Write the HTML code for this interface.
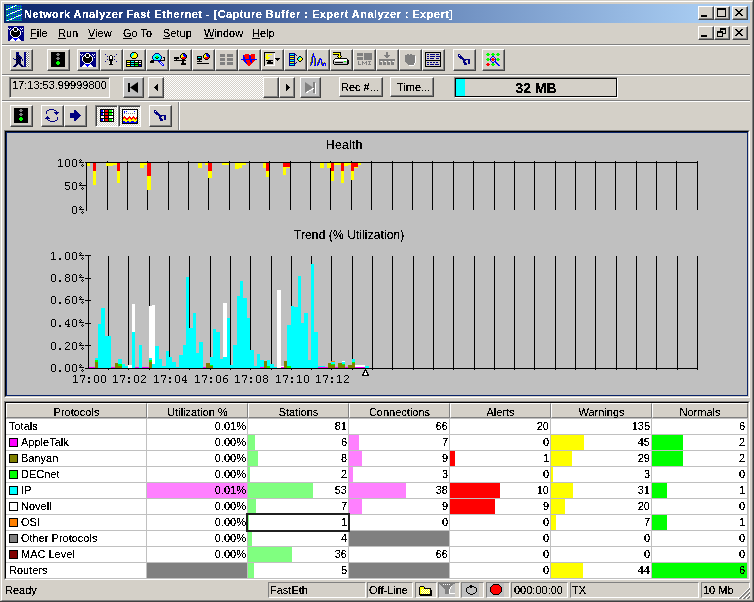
<!DOCTYPE html>
<html><head><meta charset="utf-8">
<style>
*{margin:0;padding:0;box-sizing:border-box}
html,body{width:754px;height:602px;overflow:hidden;background:#D4D0C8;font-family:"Liberation Sans",sans-serif;font-size:11px;color:#000}
.a{position:absolute}
.t{position:absolute;white-space:nowrap;line-height:13px;filter:url(#crisp)}
.tx{filter:url(#crisp)}
.cb{position:absolute;width:16px;height:14px;background:#D4D0C8;border-top:1px solid #fff;border-left:1px solid #fff;border-right:1px solid #404040;border-bottom:1px solid #404040;box-shadow:inset -1px -1px 0 #808080}
.tb{position:absolute;background:#D4D0C8;border-top:1px solid #fff;border-left:1px solid #fff;border-right:1px solid #404040;border-bottom:1px solid #404040;box-shadow:inset -1px -1px 0 #808080}
.tbp{position:absolute;border-top:1px solid #808080;border-left:1px solid #808080;border-right:1px solid #fff;border-bottom:1px solid #fff;box-shadow:inset 1px 1px 0 #404040;background-color:#fff;background-image:linear-gradient(45deg,#D4D0C8 25%,transparent 25%,transparent 75%,#D4D0C8 75%),linear-gradient(45deg,#D4D0C8 25%,transparent 25%,transparent 75%,#D4D0C8 75%);background-size:2px 2px;background-position:0 0,1px 1px}
.sep{position:absolute;height:2px;border-top:1px solid #808080;border-bottom:1px solid #fff}
.sunk{position:absolute;border-top:1px solid #808080;border-left:1px solid #808080;border-right:1px solid #fff;border-bottom:1px solid #fff}
.ic{position:absolute;left:3px;top:2px}
.m{font-family:"Liberation Mono",monospace;font-size:12px}
.cell{position:absolute;height:15px}
.num{position:absolute;text-align:right;white-space:nowrap;line-height:13px;filter:url(#crisp)}
.hd{position:absolute;top:403px;height:15px;background:#D4D0C8;text-align:center;line-height:13px;padding-top:2px;border-top:1px solid #fff;border-left:1px solid #fff;border-right:1px solid #808080;border-bottom:1px solid #808080}
.gbtn{background:#C0C0C0}
.sw{position:absolute;width:9px;height:9px;border:1px solid #000}
</style></head><body>
<svg width="0" height="0" style="position:absolute"><filter id="crisp" x="-5%" y="-5%" width="110%" height="110%"><feComponentTransfer><feFuncA type="discrete" tableValues="0 0 1 1 1"/></feComponentTransfer></filter></svg>
<div id="root" style="position:absolute;left:0;top:0;width:754px;height:602px;will-change:transform;background:#D4D0C8">

<div class="a" style="left:0;top:0;width:754px;height:602px;border-right:1px solid #404040;border-bottom:1px solid #404040"></div>
<div class="a" style="left:1px;top:1px;width:752px;height:600px;border-top:1px solid #fff;border-left:1px solid #fff;border-right:1px solid #808080;border-bottom:1px solid #808080"></div>
<div class="a" style="left:4px;top:4px;width:746px;height:19px;background:linear-gradient(to right,#0A246A 0px,#A6CAF0 692px)"></div>
<svg class="a" style="left:6px;top:5px" width="16" height="16" shape-rendering="crispEdges"><rect x="0" y="0" width="1" height="1" fill="#008080"/><rect x="1" y="0" width="1" height="1" fill="#0000FF"/><rect x="2" y="0" width="1" height="1" fill="#008080"/><rect x="3" y="0" width="1" height="1" fill="#0000FF"/><rect x="4" y="0" width="1" height="1" fill="#008080"/><rect x="5" y="0" width="1" height="1" fill="#0000FF"/><rect x="6" y="0" width="1" height="1" fill="#008080"/><rect x="7" y="0" width="1" height="1" fill="#0000FF"/><rect x="8" y="0" width="1" height="1" fill="#008080"/><rect x="9" y="0" width="1" height="1" fill="#FFFFFF"/><rect x="10" y="0" width="1" height="1" fill="#00FFFF"/><rect x="11" y="0" width="1" height="1" fill="#0000FF"/><rect x="12" y="0" width="1" height="1" fill="#008080"/><rect x="13" y="0" width="1" height="1" fill="#0000FF"/><rect x="14" y="0" width="1" height="1" fill="#008080"/><rect x="15" y="0" width="1" height="1" fill="#0000FF"/><rect x="0" y="1" width="6" height="1" fill="#008080"/><rect x="6" y="1" width="1" height="1" fill="#FFFFFF"/><rect x="7" y="1" width="1" height="1" fill="#00FFFF"/><rect x="8" y="1" width="1" height="1" fill="#FFFFFF"/><rect x="9" y="1" width="7" height="1" fill="#008080"/><rect x="0" y="2" width="1" height="1" fill="#008080"/><rect x="1" y="2" width="1" height="1" fill="#0000FF"/><rect x="2" y="2" width="1" height="1" fill="#008080"/><rect x="3" y="2" width="1" height="1" fill="#0000FF"/><rect x="4" y="2" width="1" height="1" fill="#00FFFF"/><rect x="5" y="2" width="2" height="1" fill="#FFFFFF"/><rect x="7" y="2" width="1" height="1" fill="#0000FF"/><rect x="8" y="2" width="1" height="1" fill="#008080"/><rect x="9" y="2" width="1" height="1" fill="#0000FF"/><rect x="10" y="2" width="1" height="1" fill="#008080"/><rect x="11" y="2" width="1" height="1" fill="#0000FF"/><rect x="12" y="2" width="1" height="1" fill="#008080"/><rect x="13" y="2" width="1" height="1" fill="#0000FF"/><rect x="14" y="2" width="1" height="1" fill="#008080"/><rect x="15" y="2" width="1" height="1" fill="#0000FF"/><rect x="0" y="3" width="2" height="1" fill="#008080"/><rect x="2" y="3" width="2" height="1" fill="#FFFFFF"/><rect x="4" y="3" width="12" height="1" fill="#008080"/><rect x="0" y="4" width="2" height="1" fill="#FFFFFF"/><rect x="2" y="4" width="1" height="1" fill="#008080"/><rect x="3" y="4" width="1" height="1" fill="#0000FF"/><rect x="4" y="4" width="1" height="1" fill="#008080"/><rect x="5" y="4" width="1" height="1" fill="#0000FF"/><rect x="6" y="4" width="1" height="1" fill="#008080"/><rect x="7" y="4" width="1" height="1" fill="#0000FF"/><rect x="8" y="4" width="1" height="1" fill="#008080"/><rect x="9" y="4" width="1" height="1" fill="#0000FF"/><rect x="10" y="4" width="1" height="1" fill="#008080"/><rect x="11" y="4" width="1" height="1" fill="#0000FF"/><rect x="12" y="4" width="1" height="1" fill="#008080"/><rect x="13" y="4" width="1" height="1" fill="#0000FF"/><rect x="14" y="4" width="2" height="1" fill="#FFFFFF"/><rect x="0" y="5" width="11" height="1" fill="#008080"/><rect x="11" y="5" width="3" height="1" fill="#FFFFFF"/><rect x="14" y="5" width="2" height="1" fill="#008080"/><rect x="0" y="6" width="1" height="1" fill="#008080"/><rect x="1" y="6" width="1" height="1" fill="#0000FF"/><rect x="2" y="6" width="1" height="1" fill="#008080"/><rect x="3" y="6" width="1" height="1" fill="#0000FF"/><rect x="4" y="6" width="1" height="1" fill="#008080"/><rect x="5" y="6" width="1" height="1" fill="#0000FF"/><rect x="6" y="6" width="1" height="1" fill="#008080"/><rect x="7" y="6" width="1" height="1" fill="#0000FF"/><rect x="8" y="6" width="1" height="1" fill="#008080"/><rect x="9" y="6" width="2" height="1" fill="#FFFFFF"/><rect x="11" y="6" width="1" height="1" fill="#0000FF"/><rect x="12" y="6" width="1" height="1" fill="#008080"/><rect x="13" y="6" width="1" height="1" fill="#0000FF"/><rect x="14" y="6" width="1" height="1" fill="#008080"/><rect x="15" y="6" width="1" height="1" fill="#0000FF"/><rect x="0" y="7" width="6" height="1" fill="#008080"/><rect x="6" y="7" width="3" height="1" fill="#FFFFFF"/><rect x="9" y="7" width="7" height="1" fill="#008080"/><rect x="0" y="8" width="1" height="1" fill="#008080"/><rect x="1" y="8" width="1" height="1" fill="#0000FF"/><rect x="2" y="8" width="1" height="1" fill="#008080"/><rect x="3" y="8" width="1" height="1" fill="#0000FF"/><rect x="4" y="8" width="2" height="1" fill="#FFFFFF"/><rect x="6" y="8" width="1" height="1" fill="#00FFFF"/><rect x="7" y="8" width="1" height="1" fill="#0000FF"/><rect x="8" y="8" width="1" height="1" fill="#008080"/><rect x="9" y="8" width="1" height="1" fill="#0000FF"/><rect x="10" y="8" width="1" height="1" fill="#008080"/><rect x="11" y="8" width="1" height="1" fill="#0000FF"/><rect x="12" y="8" width="1" height="1" fill="#008080"/><rect x="13" y="8" width="1" height="1" fill="#0000FF"/><rect x="14" y="8" width="1" height="1" fill="#008080"/><rect x="15" y="8" width="1" height="1" fill="#0000FF"/><rect x="0" y="9" width="2" height="1" fill="#008080"/><rect x="2" y="9" width="1" height="1" fill="#FFFFFF"/><rect x="3" y="9" width="1" height="1" fill="#00FFFF"/><rect x="4" y="9" width="11" height="1" fill="#008080"/><rect x="15" y="9" width="1" height="1" fill="#FFFFFF"/><rect x="0" y="10" width="1" height="1" fill="#00FFFF"/><rect x="1" y="10" width="1" height="1" fill="#FFFFFF"/><rect x="2" y="10" width="1" height="1" fill="#008080"/><rect x="3" y="10" width="1" height="1" fill="#0000FF"/><rect x="4" y="10" width="1" height="1" fill="#008080"/><rect x="5" y="10" width="1" height="1" fill="#0000FF"/><rect x="6" y="10" width="1" height="1" fill="#008080"/><rect x="7" y="10" width="1" height="1" fill="#0000FF"/><rect x="8" y="10" width="1" height="1" fill="#008080"/><rect x="9" y="10" width="1" height="1" fill="#0000FF"/><rect x="10" y="10" width="1" height="1" fill="#008080"/><rect x="11" y="10" width="1" height="1" fill="#0000FF"/><rect x="12" y="10" width="3" height="1" fill="#FFFFFF"/><rect x="15" y="10" width="1" height="1" fill="#0000FF"/><rect x="0" y="11" width="10" height="1" fill="#008080"/><rect x="10" y="11" width="2" height="1" fill="#FFFFFF"/><rect x="12" y="11" width="1" height="1" fill="#00FFFF"/><rect x="13" y="11" width="3" height="1" fill="#008080"/><rect x="0" y="12" width="1" height="1" fill="#008080"/><rect x="1" y="12" width="1" height="1" fill="#0000FF"/><rect x="2" y="12" width="1" height="1" fill="#008080"/><rect x="3" y="12" width="1" height="1" fill="#0000FF"/><rect x="4" y="12" width="1" height="1" fill="#008080"/><rect x="5" y="12" width="1" height="1" fill="#0000FF"/><rect x="6" y="12" width="1" height="1" fill="#008080"/><rect x="7" y="12" width="1" height="1" fill="#0000FF"/><rect x="8" y="12" width="1" height="1" fill="#FFFFFF"/><rect x="9" y="12" width="1" height="1" fill="#00FFFF"/><rect x="10" y="12" width="1" height="1" fill="#008080"/><rect x="11" y="12" width="1" height="1" fill="#0000FF"/><rect x="12" y="12" width="1" height="1" fill="#008080"/><rect x="13" y="12" width="1" height="1" fill="#0000FF"/><rect x="14" y="12" width="1" height="1" fill="#008080"/><rect x="15" y="12" width="1" height="1" fill="#0000FF"/><rect x="0" y="13" width="5" height="1" fill="#008080"/><rect x="5" y="13" width="1" height="1" fill="#FFFFFF"/><rect x="6" y="13" width="1" height="1" fill="#00FFFF"/><rect x="7" y="13" width="1" height="1" fill="#FFFFFF"/><rect x="8" y="13" width="8" height="1" fill="#008080"/><rect x="0" y="14" width="1" height="1" fill="#008080"/><rect x="1" y="14" width="1" height="1" fill="#0000FF"/><rect x="2" y="14" width="1" height="1" fill="#008080"/><rect x="3" y="14" width="1" height="1" fill="#00FFFF"/><rect x="4" y="14" width="2" height="1" fill="#FFFFFF"/><rect x="6" y="14" width="1" height="1" fill="#008080"/><rect x="7" y="14" width="1" height="1" fill="#0000FF"/><rect x="8" y="14" width="1" height="1" fill="#008080"/><rect x="9" y="14" width="1" height="1" fill="#0000FF"/><rect x="10" y="14" width="1" height="1" fill="#008080"/><rect x="11" y="14" width="1" height="1" fill="#0000FF"/><rect x="12" y="14" width="1" height="1" fill="#008080"/><rect x="13" y="14" width="1" height="1" fill="#0000FF"/><rect x="14" y="14" width="1" height="1" fill="#008080"/><rect x="15" y="14" width="1" height="1" fill="#0000FF"/><rect x="0" y="15" width="1" height="1" fill="#00FFFF"/><rect x="1" y="15" width="2" height="1" fill="#FFFFFF"/><rect x="3" y="15" width="13" height="1" fill="#008080"/></svg>
<div class="t" style="left:24px;top:8px;color:#fff;font-weight:bold;letter-spacing:0.44px">Network Analyzer Fast Ethernet - [Capture Buffer : Expert Analyzer : Expert]</div>
<div class="cb" style="left:698px;top:6px"><div class="a" style="left:2px;top:8px;width:6px;height:2px;background:#000"></div></div><div class="cb" style="left:714px;top:6px"><div class="a" style="left:2px;top:1px;width:9px;height:9px;border:1px solid #000;border-top-width:2px"></div></div><div class="cb" style="left:732px;top:6px"><svg class="a" style="left:2px;top:2px" width="8" height="7" shape-rendering="crispEdges"><path d="M0 0h2v1h-2zM6 0h2v1h-2zM1 1h2v1h-2zM5 1h2v1h-2zM2 2h4v1h-4zM3 3h2v1h-2zM2 4h4v1h-4zM1 5h2v1h-2zM5 5h2v1h-2zM0 6h2v1h-2zM6 6h2v1h-2z" fill="#000"/></svg></div>
<svg class="a" style="left:8px;top:26px" width="16" height="15" shape-rendering="crispEdges"><rect x="0" y="0" width="16" height="1" fill="#000080"/><rect x="0" y="1" width="6" height="1" fill="#000080"/><rect x="6" y="1" width="3" height="1" fill="#FFFFFF"/><rect x="9" y="1" width="7" height="1" fill="#000080"/><rect x="0" y="2" width="1" height="1" fill="#FFFFFF"/><rect x="1" y="2" width="1" height="1" fill="#000080"/><rect x="2" y="2" width="1" height="1" fill="#FFFFFF"/><rect x="3" y="2" width="2" height="1" fill="#000080"/><rect x="5" y="2" width="1" height="1" fill="#FFFFFF"/><rect x="6" y="2" width="3" height="1" fill="#000000"/><rect x="9" y="2" width="1" height="1" fill="#FFFFFF"/><rect x="10" y="2" width="2" height="1" fill="#000080"/><rect x="12" y="2" width="1" height="1" fill="#FFFFFF"/><rect x="13" y="2" width="1" height="1" fill="#000080"/><rect x="14" y="2" width="1" height="1" fill="#FFFFFF"/><rect x="15" y="2" width="1" height="1" fill="#000080"/><rect x="0" y="3" width="1" height="1" fill="#000080"/><rect x="1" y="3" width="1" height="1" fill="#FFFFFF"/><rect x="2" y="3" width="2" height="1" fill="#000080"/><rect x="4" y="3" width="2" height="1" fill="#FFFFFF"/><rect x="6" y="3" width="3" height="1" fill="#000000"/><rect x="9" y="3" width="2" height="1" fill="#FFFFFF"/><rect x="11" y="3" width="2" height="1" fill="#000080"/><rect x="13" y="3" width="1" height="1" fill="#FFFFFF"/><rect x="14" y="3" width="2" height="1" fill="#000080"/><rect x="0" y="4" width="3" height="1" fill="#000080"/><rect x="3" y="4" width="1" height="1" fill="#FFFFFF"/><rect x="4" y="4" width="1" height="1" fill="#000000"/><rect x="5" y="4" width="1" height="1" fill="#FFFFFF"/><rect x="6" y="4" width="3" height="1" fill="#000000"/><rect x="9" y="4" width="1" height="1" fill="#FFFFFF"/><rect x="10" y="4" width="1" height="1" fill="#000000"/><rect x="11" y="4" width="1" height="1" fill="#FFFFFF"/><rect x="12" y="4" width="4" height="1" fill="#000080"/><rect x="0" y="5" width="2" height="1" fill="#000080"/><rect x="2" y="5" width="1" height="1" fill="#FFFFFF"/><rect x="3" y="5" width="3" height="1" fill="#000000"/><rect x="6" y="5" width="3" height="1" fill="#FFFFFF"/><rect x="9" y="5" width="3" height="1" fill="#000000"/><rect x="12" y="5" width="1" height="1" fill="#FFFFFF"/><rect x="13" y="5" width="1" height="1" fill="#000080"/><rect x="14" y="5" width="1" height="1" fill="#FFFFFF"/><rect x="15" y="5" width="1" height="1" fill="#000080"/><rect x="0" y="6" width="2" height="1" fill="#000080"/><rect x="2" y="6" width="1" height="1" fill="#FFFFFF"/><rect x="3" y="6" width="9" height="1" fill="#000000"/><rect x="12" y="6" width="1" height="1" fill="#FFFFFF"/><rect x="13" y="6" width="3" height="1" fill="#000080"/><rect x="0" y="7" width="2" height="1" fill="#000080"/><rect x="2" y="7" width="1" height="1" fill="#FFFFFF"/><rect x="3" y="7" width="9" height="1" fill="#000000"/><rect x="12" y="7" width="1" height="1" fill="#FFFFFF"/><rect x="13" y="7" width="3" height="1" fill="#000080"/><rect x="0" y="8" width="2" height="1" fill="#000080"/><rect x="2" y="8" width="1" height="1" fill="#FFFFFF"/><rect x="3" y="8" width="9" height="1" fill="#000000"/><rect x="12" y="8" width="1" height="1" fill="#FFFFFF"/><rect x="13" y="8" width="3" height="1" fill="#000080"/><rect x="0" y="9" width="3" height="1" fill="#000080"/><rect x="3" y="9" width="1" height="1" fill="#FFFFFF"/><rect x="4" y="9" width="7" height="1" fill="#000000"/><rect x="11" y="9" width="1" height="1" fill="#FFFFFF"/><rect x="12" y="9" width="4" height="1" fill="#000080"/><rect x="0" y="10" width="4" height="1" fill="#000080"/><rect x="4" y="10" width="1" height="1" fill="#FFFFFF"/><rect x="5" y="10" width="5" height="1" fill="#000000"/><rect x="10" y="10" width="1" height="1" fill="#FFFFFF"/><rect x="11" y="10" width="5" height="1" fill="#000080"/><rect x="0" y="11" width="5" height="1" fill="#000080"/><rect x="5" y="11" width="5" height="1" fill="#FFFFFF"/><rect x="10" y="11" width="6" height="1" fill="#000080"/><rect x="0" y="12" width="4" height="1" fill="#000080"/><rect x="4" y="12" width="1" height="1" fill="#FFFFFF"/><rect x="5" y="12" width="5" height="1" fill="#0000FF"/><rect x="10" y="12" width="1" height="1" fill="#FFFFFF"/><rect x="11" y="12" width="5" height="1" fill="#000080"/><rect x="0" y="13" width="3" height="1" fill="#000080"/><rect x="3" y="13" width="3" height="1" fill="#FFFFFF"/><rect x="6" y="13" width="3" height="1" fill="#0000FF"/><rect x="9" y="13" width="3" height="1" fill="#FFFFFF"/><rect x="12" y="13" width="4" height="1" fill="#000080"/><rect x="0" y="14" width="2" height="1" fill="#000080"/><rect x="2" y="14" width="5" height="1" fill="#FFFFFF"/><rect x="7" y="14" width="1" height="1" fill="#0000FF"/><rect x="8" y="14" width="5" height="1" fill="#FFFFFF"/><rect x="13" y="14" width="3" height="1" fill="#000080"/></svg>
<div class="t" style="left:30px;top:27px;text-underline-offset:1px"><u>F</u>ile</div>
<div class="t" style="left:58px;top:27px;text-underline-offset:1px"><u>R</u>un</div>
<div class="t" style="left:88px;top:27px;text-underline-offset:1px"><u>V</u>iew</div>
<div class="t" style="left:123px;top:27px;text-underline-offset:1px"><u>G</u>o To</div>
<div class="t" style="left:163px;top:27px;text-underline-offset:1px"><u>S</u>etup</div>
<div class="t" style="left:204px;top:27px;text-underline-offset:1px"><u>W</u>indow</div>
<div class="t" style="left:252px;top:27px;text-underline-offset:1px"><u>H</u>elp</div>
<div class="cb" style="left:698px;top:26px"><div class="a" style="left:2px;top:8px;width:6px;height:2px;background:#000"></div></div><div class="cb" style="left:714px;top:26px"><div class="a" style="left:5px;top:1px;width:6px;height:6px;border:1px solid #000;border-top-width:2px"></div><div class="a" style="left:2px;top:4px;width:6px;height:6px;border:1px solid #000;border-top-width:2px;background:#D4D0C8"></div></div><div class="cb" style="left:732px;top:26px"><svg class="a" style="left:2px;top:2px" width="8" height="7" shape-rendering="crispEdges"><path d="M0 0h2v1h-2zM6 0h2v1h-2zM1 1h2v1h-2zM5 1h2v1h-2zM2 2h4v1h-4zM3 3h2v1h-2zM2 4h4v1h-4zM1 5h2v1h-2zM5 5h2v1h-2zM0 6h2v1h-2zM6 6h2v1h-2z" fill="#000"/></svg></div>
<div class="sep" style="left:2px;top:44px;width:748px"></div>
<div class="tb" style="left:10px;top:49px;width:23px;height:22px"><svg class="a" style="left:2px;top:2px" width="16" height="15" shape-rendering="crispEdges"><rect x="3" y="0" width="3" height="1" fill="#000080"/><rect x="11" y="0" width="2" height="1" fill="#000080"/><rect x="13" y="0" width="1" height="1" fill="#808080"/><rect x="14" y="0" width="1" height="1" fill="#FFFFFF"/><rect x="15" y="0" width="1" height="1" fill="#808080"/><rect x="3" y="1" width="1" height="1" fill="#000080"/><rect x="4" y="1" width="1" height="1" fill="#000000"/><rect x="5" y="1" width="1" height="1" fill="#000080"/><rect x="11" y="1" width="2" height="1" fill="#000080"/><rect x="13" y="1" width="1" height="1" fill="#FFFFFF"/><rect x="14" y="1" width="1" height="1" fill="#808080"/><rect x="15" y="1" width="1" height="1" fill="#FFFFFF"/><rect x="3" y="2" width="3" height="1" fill="#000080"/><rect x="11" y="2" width="2" height="1" fill="#000080"/><rect x="13" y="2" width="1" height="1" fill="#808080"/><rect x="14" y="2" width="1" height="1" fill="#FFFFFF"/><rect x="15" y="2" width="1" height="1" fill="#808080"/><rect x="3" y="3" width="1" height="1" fill="#000080"/><rect x="4" y="3" width="1" height="1" fill="#000000"/><rect x="5" y="3" width="2" height="1" fill="#000080"/><rect x="11" y="3" width="2" height="1" fill="#000080"/><rect x="13" y="3" width="1" height="1" fill="#FFFFFF"/><rect x="14" y="3" width="1" height="1" fill="#808080"/><rect x="15" y="3" width="1" height="1" fill="#FFFFFF"/><rect x="3" y="4" width="1" height="1" fill="#000000"/><rect x="4" y="4" width="1" height="1" fill="#000080"/><rect x="5" y="4" width="1" height="1" fill="#000000"/><rect x="6" y="4" width="2" height="1" fill="#000080"/><rect x="11" y="4" width="2" height="1" fill="#000080"/><rect x="13" y="4" width="1" height="1" fill="#808080"/><rect x="14" y="4" width="1" height="1" fill="#FFFFFF"/><rect x="15" y="4" width="1" height="1" fill="#808080"/><rect x="3" y="5" width="1" height="1" fill="#000080"/><rect x="4" y="5" width="1" height="1" fill="#000000"/><rect x="5" y="5" width="1" height="1" fill="#000080"/><rect x="6" y="5" width="1" height="1" fill="#000000"/><rect x="7" y="5" width="2" height="1" fill="#000080"/><rect x="11" y="5" width="2" height="1" fill="#000080"/><rect x="13" y="5" width="1" height="1" fill="#FFFFFF"/><rect x="14" y="5" width="1" height="1" fill="#808080"/><rect x="15" y="5" width="1" height="1" fill="#FFFFFF"/><rect x="0" y="6" width="1" height="1" fill="#000080"/><rect x="3" y="6" width="1" height="1" fill="#000000"/><rect x="4" y="6" width="1" height="1" fill="#000080"/><rect x="5" y="6" width="1" height="1" fill="#000000"/><rect x="6" y="6" width="1" height="1" fill="#000080"/><rect x="7" y="6" width="1" height="1" fill="#000000"/><rect x="8" y="6" width="1" height="1" fill="#000080"/><rect x="11" y="6" width="2" height="1" fill="#000080"/><rect x="13" y="6" width="1" height="1" fill="#808080"/><rect x="14" y="6" width="1" height="1" fill="#FFFFFF"/><rect x="15" y="6" width="1" height="1" fill="#808080"/><rect x="1" y="7" width="3" height="1" fill="#000080"/><rect x="4" y="7" width="1" height="1" fill="#000000"/><rect x="5" y="7" width="1" height="1" fill="#000080"/><rect x="6" y="7" width="1" height="1" fill="#000000"/><rect x="7" y="7" width="1" height="1" fill="#000080"/><rect x="9" y="7" width="1" height="1" fill="#000080"/><rect x="11" y="7" width="2" height="1" fill="#000080"/><rect x="13" y="7" width="1" height="1" fill="#FFFFFF"/><rect x="14" y="7" width="1" height="1" fill="#808080"/><rect x="15" y="7" width="1" height="1" fill="#FFFFFF"/><rect x="3" y="8" width="1" height="1" fill="#000000"/><rect x="4" y="8" width="1" height="1" fill="#000080"/><rect x="5" y="8" width="1" height="1" fill="#000000"/><rect x="6" y="8" width="1" height="1" fill="#000080"/><rect x="7" y="8" width="1" height="1" fill="#000000"/><rect x="9" y="8" width="1" height="1" fill="#000080"/><rect x="11" y="8" width="2" height="1" fill="#000080"/><rect x="13" y="8" width="1" height="1" fill="#808080"/><rect x="14" y="8" width="1" height="1" fill="#FFFFFF"/><rect x="15" y="8" width="1" height="1" fill="#808080"/><rect x="3" y="9" width="1" height="1" fill="#000080"/><rect x="4" y="9" width="1" height="1" fill="#000000"/><rect x="5" y="9" width="1" height="1" fill="#000080"/><rect x="6" y="9" width="1" height="1" fill="#000000"/><rect x="7" y="9" width="1" height="1" fill="#000080"/><rect x="11" y="9" width="2" height="1" fill="#000080"/><rect x="13" y="9" width="1" height="1" fill="#FFFFFF"/><rect x="14" y="9" width="1" height="1" fill="#808080"/><rect x="15" y="9" width="1" height="1" fill="#FFFFFF"/><rect x="3" y="10" width="1" height="1" fill="#000000"/><rect x="4" y="10" width="1" height="1" fill="#000080"/><rect x="5" y="10" width="1" height="1" fill="#000000"/><rect x="6" y="10" width="1" height="1" fill="#000080"/><rect x="7" y="10" width="1" height="1" fill="#000000"/><rect x="11" y="10" width="2" height="1" fill="#000080"/><rect x="13" y="10" width="1" height="1" fill="#808080"/><rect x="14" y="10" width="1" height="1" fill="#FFFFFF"/><rect x="15" y="10" width="1" height="1" fill="#808080"/><rect x="3" y="11" width="1" height="1" fill="#000080"/><rect x="4" y="11" width="1" height="1" fill="#000000"/><rect x="5" y="11" width="1" height="1" fill="#000080"/><rect x="6" y="11" width="1" height="1" fill="#000000"/><rect x="7" y="11" width="1" height="1" fill="#000080"/><rect x="11" y="11" width="2" height="1" fill="#000080"/><rect x="13" y="11" width="1" height="1" fill="#FFFFFF"/><rect x="14" y="11" width="1" height="1" fill="#808080"/><rect x="15" y="11" width="1" height="1" fill="#FFFFFF"/><rect x="2" y="12" width="1" height="1" fill="#000080"/><rect x="3" y="12" width="1" height="1" fill="#000000"/><rect x="4" y="12" width="1" height="1" fill="#000080"/><rect x="6" y="12" width="1" height="1" fill="#000080"/><rect x="7" y="12" width="1" height="1" fill="#000000"/><rect x="8" y="12" width="1" height="1" fill="#000080"/><rect x="11" y="12" width="2" height="1" fill="#000080"/><rect x="13" y="12" width="1" height="1" fill="#808080"/><rect x="14" y="12" width="1" height="1" fill="#FFFFFF"/><rect x="15" y="12" width="1" height="1" fill="#808080"/><rect x="1" y="13" width="1" height="1" fill="#000080"/><rect x="2" y="13" width="1" height="1" fill="#000000"/><rect x="3" y="13" width="1" height="1" fill="#000080"/><rect x="7" y="13" width="1" height="1" fill="#000080"/><rect x="8" y="13" width="1" height="1" fill="#000000"/><rect x="9" y="13" width="1" height="1" fill="#000080"/><rect x="11" y="13" width="2" height="1" fill="#000080"/><rect x="13" y="13" width="1" height="1" fill="#FFFFFF"/><rect x="14" y="13" width="1" height="1" fill="#808080"/><rect x="15" y="13" width="1" height="1" fill="#FFFFFF"/><rect x="0" y="14" width="1" height="1" fill="#000080"/><rect x="1" y="14" width="1" height="1" fill="#000000"/><rect x="2" y="14" width="1" height="1" fill="#000080"/><rect x="8" y="14" width="1" height="1" fill="#000080"/><rect x="9" y="14" width="1" height="1" fill="#000000"/><rect x="10" y="14" width="3" height="1" fill="#000080"/><rect x="13" y="14" width="1" height="1" fill="#808080"/><rect x="14" y="14" width="1" height="1" fill="#FFFFFF"/><rect x="15" y="14" width="1" height="1" fill="#808080"/></svg></div>
<div class="tb" style="left:47px;top:49px;width:23px;height:22px"><svg class="a" style="left:2px;top:2px" width="16" height="15" shape-rendering="crispEdges"><rect x="1" y="0" width="14" height="1" fill="#000000"/><rect x="1" y="1" width="6" height="1" fill="#000000"/><rect x="7" y="1" width="2" height="1" fill="#808080"/><rect x="9" y="1" width="6" height="1" fill="#000000"/><rect x="1" y="2" width="5" height="1" fill="#000000"/><rect x="6" y="2" width="4" height="1" fill="#808080"/><rect x="10" y="2" width="5" height="1" fill="#000000"/><rect x="1" y="3" width="6" height="1" fill="#000000"/><rect x="7" y="3" width="2" height="1" fill="#808080"/><rect x="9" y="3" width="6" height="1" fill="#000000"/><rect x="1" y="4" width="14" height="1" fill="#000000"/><rect x="1" y="5" width="6" height="1" fill="#000000"/><rect x="7" y="5" width="2" height="1" fill="#808080"/><rect x="9" y="5" width="6" height="1" fill="#000000"/><rect x="1" y="6" width="5" height="1" fill="#000000"/><rect x="6" y="6" width="4" height="1" fill="#808080"/><rect x="10" y="6" width="5" height="1" fill="#000000"/><rect x="1" y="7" width="6" height="1" fill="#000000"/><rect x="7" y="7" width="2" height="1" fill="#808080"/><rect x="9" y="7" width="6" height="1" fill="#000000"/><rect x="1" y="8" width="14" height="1" fill="#000000"/><rect x="1" y="9" width="6" height="1" fill="#000000"/><rect x="7" y="9" width="2" height="1" fill="#00FF00"/><rect x="9" y="9" width="6" height="1" fill="#000000"/><rect x="1" y="10" width="5" height="1" fill="#000000"/><rect x="6" y="10" width="4" height="1" fill="#00FF00"/><rect x="10" y="10" width="5" height="1" fill="#000000"/><rect x="1" y="11" width="5" height="1" fill="#000000"/><rect x="6" y="11" width="4" height="1" fill="#00FF00"/><rect x="10" y="11" width="5" height="1" fill="#000000"/><rect x="1" y="12" width="6" height="1" fill="#000000"/><rect x="7" y="12" width="2" height="1" fill="#00FF00"/><rect x="9" y="12" width="6" height="1" fill="#000000"/><rect x="1" y="13" width="14" height="1" fill="#000000"/><rect x="1" y="14" width="14" height="1" fill="#000000"/></svg></div>
<div class="tb" style="left:77px;top:49px;width:23px;height:22px"><svg class="a" style="left:2px;top:2px" width="16" height="15" shape-rendering="crispEdges"><rect x="0" y="0" width="16" height="1" fill="#000080"/><rect x="0" y="1" width="6" height="1" fill="#000080"/><rect x="6" y="1" width="3" height="1" fill="#FFFFFF"/><rect x="9" y="1" width="7" height="1" fill="#000080"/><rect x="0" y="2" width="1" height="1" fill="#FFFFFF"/><rect x="1" y="2" width="1" height="1" fill="#000080"/><rect x="2" y="2" width="1" height="1" fill="#FFFFFF"/><rect x="3" y="2" width="2" height="1" fill="#000080"/><rect x="5" y="2" width="1" height="1" fill="#FFFFFF"/><rect x="6" y="2" width="3" height="1" fill="#000000"/><rect x="9" y="2" width="1" height="1" fill="#FFFFFF"/><rect x="10" y="2" width="2" height="1" fill="#000080"/><rect x="12" y="2" width="1" height="1" fill="#FFFFFF"/><rect x="13" y="2" width="1" height="1" fill="#000080"/><rect x="14" y="2" width="1" height="1" fill="#FFFFFF"/><rect x="15" y="2" width="1" height="1" fill="#000080"/><rect x="0" y="3" width="1" height="1" fill="#000080"/><rect x="1" y="3" width="1" height="1" fill="#FFFFFF"/><rect x="2" y="3" width="2" height="1" fill="#000080"/><rect x="4" y="3" width="2" height="1" fill="#FFFFFF"/><rect x="6" y="3" width="3" height="1" fill="#000000"/><rect x="9" y="3" width="2" height="1" fill="#FFFFFF"/><rect x="11" y="3" width="2" height="1" fill="#000080"/><rect x="13" y="3" width="1" height="1" fill="#FFFFFF"/><rect x="14" y="3" width="2" height="1" fill="#000080"/><rect x="0" y="4" width="3" height="1" fill="#000080"/><rect x="3" y="4" width="1" height="1" fill="#FFFFFF"/><rect x="4" y="4" width="1" height="1" fill="#000000"/><rect x="5" y="4" width="1" height="1" fill="#FFFFFF"/><rect x="6" y="4" width="3" height="1" fill="#000000"/><rect x="9" y="4" width="1" height="1" fill="#FFFFFF"/><rect x="10" y="4" width="1" height="1" fill="#000000"/><rect x="11" y="4" width="1" height="1" fill="#FFFFFF"/><rect x="12" y="4" width="4" height="1" fill="#000080"/><rect x="0" y="5" width="2" height="1" fill="#000080"/><rect x="2" y="5" width="1" height="1" fill="#FFFFFF"/><rect x="3" y="5" width="3" height="1" fill="#000000"/><rect x="6" y="5" width="3" height="1" fill="#FFFFFF"/><rect x="9" y="5" width="3" height="1" fill="#000000"/><rect x="12" y="5" width="1" height="1" fill="#FFFFFF"/><rect x="13" y="5" width="1" height="1" fill="#000080"/><rect x="14" y="5" width="1" height="1" fill="#FFFFFF"/><rect x="15" y="5" width="1" height="1" fill="#000080"/><rect x="0" y="6" width="2" height="1" fill="#000080"/><rect x="2" y="6" width="1" height="1" fill="#FFFFFF"/><rect x="3" y="6" width="9" height="1" fill="#000000"/><rect x="12" y="6" width="1" height="1" fill="#FFFFFF"/><rect x="13" y="6" width="3" height="1" fill="#000080"/><rect x="0" y="7" width="2" height="1" fill="#000080"/><rect x="2" y="7" width="1" height="1" fill="#FFFFFF"/><rect x="3" y="7" width="9" height="1" fill="#000000"/><rect x="12" y="7" width="1" height="1" fill="#FFFFFF"/><rect x="13" y="7" width="3" height="1" fill="#000080"/><rect x="0" y="8" width="2" height="1" fill="#000080"/><rect x="2" y="8" width="1" height="1" fill="#FFFFFF"/><rect x="3" y="8" width="9" height="1" fill="#000000"/><rect x="12" y="8" width="1" height="1" fill="#FFFFFF"/><rect x="13" y="8" width="3" height="1" fill="#000080"/><rect x="0" y="9" width="3" height="1" fill="#000080"/><rect x="3" y="9" width="1" height="1" fill="#FFFFFF"/><rect x="4" y="9" width="7" height="1" fill="#000000"/><rect x="11" y="9" width="1" height="1" fill="#FFFFFF"/><rect x="12" y="9" width="4" height="1" fill="#000080"/><rect x="0" y="10" width="4" height="1" fill="#000080"/><rect x="4" y="10" width="1" height="1" fill="#FFFFFF"/><rect x="5" y="10" width="5" height="1" fill="#000000"/><rect x="10" y="10" width="1" height="1" fill="#FFFFFF"/><rect x="11" y="10" width="5" height="1" fill="#000080"/><rect x="0" y="11" width="5" height="1" fill="#000080"/><rect x="5" y="11" width="5" height="1" fill="#FFFFFF"/><rect x="10" y="11" width="6" height="1" fill="#000080"/><rect x="0" y="12" width="4" height="1" fill="#000080"/><rect x="4" y="12" width="1" height="1" fill="#FFFFFF"/><rect x="5" y="12" width="5" height="1" fill="#0000FF"/><rect x="10" y="12" width="1" height="1" fill="#FFFFFF"/><rect x="11" y="12" width="5" height="1" fill="#000080"/><rect x="0" y="13" width="3" height="1" fill="#000080"/><rect x="3" y="13" width="3" height="1" fill="#FFFFFF"/><rect x="6" y="13" width="3" height="1" fill="#0000FF"/><rect x="9" y="13" width="3" height="1" fill="#FFFFFF"/><rect x="12" y="13" width="4" height="1" fill="#000080"/><rect x="0" y="14" width="2" height="1" fill="#000080"/><rect x="2" y="14" width="5" height="1" fill="#FFFFFF"/><rect x="7" y="14" width="1" height="1" fill="#0000FF"/><rect x="8" y="14" width="5" height="1" fill="#FFFFFF"/><rect x="13" y="14" width="3" height="1" fill="#000080"/></svg></div>
<div class="tb" style="left:100px;top:49px;width:23px;height:22px"><svg class="a" style="left:2px;top:2px" width="16" height="13" shape-rendering="crispEdges"><rect x="2" y="2" width="1" height="1" fill="#000080"/><rect x="13" y="2" width="1" height="1" fill="#000080"/><rect x="7" y="3" width="2" height="1" fill="#000000"/><rect x="4" y="4" width="1" height="1" fill="#000080"/><rect x="6" y="4" width="1" height="1" fill="#000000"/><rect x="7" y="4" width="2" height="1" fill="#FFFFFF"/><rect x="9" y="4" width="1" height="1" fill="#000000"/><rect x="11" y="4" width="1" height="1" fill="#000080"/><rect x="6" y="5" width="1" height="1" fill="#000000"/><rect x="7" y="5" width="2" height="1" fill="#FFFFFF"/><rect x="9" y="5" width="1" height="1" fill="#000000"/><rect x="6" y="6" width="1" height="1" fill="#000000"/><rect x="7" y="6" width="2" height="1" fill="#FFFFFF"/><rect x="9" y="6" width="1" height="1" fill="#000000"/><rect x="4" y="7" width="1" height="1" fill="#000080"/><rect x="6" y="7" width="4" height="1" fill="#000000"/><rect x="11" y="7" width="1" height="1" fill="#000080"/><rect x="6" y="8" width="4" height="1" fill="#000000"/><rect x="2" y="9" width="1" height="1" fill="#000080"/><rect x="7" y="9" width="2" height="1" fill="#000000"/><rect x="13" y="9" width="1" height="1" fill="#000080"/><rect x="7" y="10" width="2" height="1" fill="#000000"/><rect x="6" y="11" width="1" height="1" fill="#FFFFFF"/><rect x="7" y="11" width="2" height="1" fill="#000000"/><rect x="9" y="11" width="1" height="1" fill="#FFFFFF"/><rect x="6" y="12" width="4" height="1" fill="#000000"/></svg></div>
<div class="tb" style="left:123px;top:49px;width:23px;height:22px"><svg class="a" style="left:2px;top:2px" width="16" height="15" shape-rendering="crispEdges"><rect x="6" y="0" width="4" height="1" fill="#000000"/><rect x="5" y="1" width="1" height="1" fill="#000000"/><rect x="6" y="1" width="2" height="1" fill="#00FFFF"/><rect x="8" y="1" width="2" height="1" fill="#FFFF00"/><rect x="10" y="1" width="1" height="1" fill="#000000"/><rect x="4" y="2" width="1" height="1" fill="#000000"/><rect x="5" y="2" width="3" height="1" fill="#00FFFF"/><rect x="8" y="2" width="3" height="1" fill="#FFFF00"/><rect x="11" y="2" width="1" height="1" fill="#000000"/><rect x="4" y="3" width="1" height="1" fill="#000000"/><rect x="5" y="3" width="2" height="1" fill="#00FFFF"/><rect x="7" y="3" width="4" height="1" fill="#FFFF00"/><rect x="11" y="3" width="1" height="1" fill="#000000"/><rect x="4" y="4" width="1" height="1" fill="#000000"/><rect x="5" y="4" width="1" height="1" fill="#00FFFF"/><rect x="6" y="4" width="5" height="1" fill="#FFFF00"/><rect x="11" y="4" width="1" height="1" fill="#000000"/><rect x="5" y="5" width="1" height="1" fill="#000000"/><rect x="6" y="5" width="4" height="1" fill="#FFFF00"/><rect x="10" y="5" width="1" height="1" fill="#000000"/><rect x="6" y="6" width="4" height="1" fill="#000000"/><rect x="0" y="8" width="16" height="1" fill="#000000"/><rect x="0" y="9" width="1" height="1" fill="#000000"/><rect x="1" y="9" width="3" height="1" fill="#FFFF00"/><rect x="4" y="9" width="1" height="1" fill="#000000"/><rect x="5" y="9" width="3" height="1" fill="#00FFFF"/><rect x="8" y="9" width="1" height="1" fill="#000000"/><rect x="9" y="9" width="3" height="1" fill="#FFFFFF"/><rect x="12" y="9" width="1" height="1" fill="#000000"/><rect x="13" y="9" width="2" height="1" fill="#FFFFFF"/><rect x="15" y="9" width="1" height="1" fill="#000000"/><rect x="0" y="10" width="16" height="1" fill="#000000"/><rect x="0" y="11" width="1" height="1" fill="#000000"/><rect x="1" y="11" width="3" height="1" fill="#FFFFFF"/><rect x="4" y="11" width="1" height="1" fill="#000000"/><rect x="5" y="11" width="3" height="1" fill="#00FFFF"/><rect x="8" y="11" width="1" height="1" fill="#000000"/><rect x="9" y="11" width="3" height="1" fill="#00FF00"/><rect x="12" y="11" width="1" height="1" fill="#000000"/><rect x="13" y="11" width="2" height="1" fill="#FFFFFF"/><rect x="15" y="11" width="1" height="1" fill="#000000"/><rect x="0" y="12" width="16" height="1" fill="#000000"/><rect x="0" y="13" width="1" height="1" fill="#000000"/><rect x="1" y="13" width="3" height="1" fill="#FFFF00"/><rect x="4" y="13" width="1" height="1" fill="#000000"/><rect x="5" y="13" width="3" height="1" fill="#00FFFF"/><rect x="8" y="13" width="1" height="1" fill="#000000"/><rect x="9" y="13" width="3" height="1" fill="#00FF00"/><rect x="12" y="13" width="1" height="1" fill="#000000"/><rect x="13" y="13" width="2" height="1" fill="#0000FF"/><rect x="15" y="13" width="1" height="1" fill="#000000"/><rect x="0" y="14" width="16" height="1" fill="#000000"/></svg></div>
<div class="tb" style="left:146px;top:49px;width:23px;height:22px"><svg class="a" style="left:2px;top:2px" width="16" height="14" shape-rendering="crispEdges"><rect x="6" y="1" width="4" height="1" fill="#000080"/><rect x="5" y="2" width="1" height="1" fill="#000080"/><rect x="6" y="2" width="4" height="1" fill="#00FFFF"/><rect x="10" y="2" width="1" height="1" fill="#000080"/><rect x="4" y="3" width="1" height="1" fill="#000080"/><rect x="5" y="3" width="6" height="1" fill="#00FFFF"/><rect x="11" y="3" width="1" height="1" fill="#000080"/><rect x="3" y="4" width="1" height="1" fill="#000080"/><rect x="4" y="4" width="3" height="1" fill="#00FFFF"/><rect x="7" y="4" width="2" height="1" fill="#00FF00"/><rect x="9" y="4" width="3" height="1" fill="#00FFFF"/><rect x="12" y="4" width="1" height="1" fill="#000080"/><rect x="3" y="5" width="1" height="1" fill="#000080"/><rect x="4" y="5" width="2" height="1" fill="#00FFFF"/><rect x="6" y="5" width="1" height="1" fill="#000000"/><rect x="7" y="5" width="2" height="1" fill="#00FF00"/><rect x="9" y="5" width="1" height="1" fill="#000000"/><rect x="10" y="5" width="2" height="1" fill="#00FFFF"/><rect x="12" y="5" width="1" height="1" fill="#000080"/><rect x="14" y="5" width="2" height="1" fill="#000000"/><rect x="3" y="6" width="1" height="1" fill="#000080"/><rect x="4" y="6" width="3" height="1" fill="#00FFFF"/><rect x="7" y="6" width="2" height="1" fill="#000000"/><rect x="9" y="6" width="3" height="1" fill="#00FFFF"/><rect x="12" y="6" width="1" height="1" fill="#000080"/><rect x="15" y="6" width="1" height="1" fill="#000000"/><rect x="4" y="7" width="1" height="1" fill="#000080"/><rect x="5" y="7" width="6" height="1" fill="#00FFFF"/><rect x="11" y="7" width="1" height="1" fill="#000080"/><rect x="15" y="7" width="1" height="1" fill="#000000"/><rect x="2" y="8" width="3" height="1" fill="#000000"/><rect x="5" y="8" width="6" height="1" fill="#000080"/><rect x="11" y="8" width="5" height="1" fill="#000000"/><rect x="1" y="9" width="4" height="1" fill="#000000"/><rect x="9" y="9" width="1" height="1" fill="#000080"/><rect x="10" y="9" width="2" height="1" fill="#0000FF"/><rect x="1" y="10" width="4" height="1" fill="#000000"/><rect x="10" y="10" width="1" height="1" fill="#0000FF"/><rect x="11" y="10" width="1" height="1" fill="#FFFFFF"/><rect x="12" y="10" width="1" height="1" fill="#0000FF"/><rect x="11" y="11" width="1" height="1" fill="#0000FF"/><rect x="12" y="11" width="1" height="1" fill="#FFFFFF"/><rect x="13" y="11" width="1" height="1" fill="#0000FF"/><rect x="12" y="12" width="1" height="1" fill="#0000FF"/><rect x="13" y="12" width="1" height="1" fill="#FFFFFF"/><rect x="14" y="12" width="1" height="1" fill="#0000FF"/><rect x="13" y="13" width="2" height="1" fill="#0000FF"/></svg></div>
<div class="tb" style="left:169px;top:49px;width:23px;height:22px"><svg class="a" style="left:2px;top:2px" width="16" height="13" shape-rendering="crispEdges"><rect x="10" y="1" width="3" height="1" fill="#000000"/><rect x="9" y="2" width="1" height="1" fill="#000000"/><rect x="10" y="2" width="1" height="1" fill="#FFFF00"/><rect x="11" y="2" width="2" height="1" fill="#0000FF"/><rect x="13" y="2" width="1" height="1" fill="#000000"/><rect x="8" y="3" width="1" height="1" fill="#000000"/><rect x="9" y="3" width="2" height="1" fill="#FFFF00"/><rect x="11" y="3" width="3" height="1" fill="#0000FF"/><rect x="14" y="3" width="1" height="1" fill="#000000"/><rect x="8" y="4" width="1" height="1" fill="#000000"/><rect x="9" y="4" width="3" height="1" fill="#FFFF00"/><rect x="12" y="4" width="2" height="1" fill="#0000FF"/><rect x="14" y="4" width="1" height="1" fill="#000000"/><rect x="2" y="5" width="5" height="1" fill="#000000"/><rect x="8" y="5" width="1" height="1" fill="#000000"/><rect x="9" y="5" width="1" height="1" fill="#FFFF00"/><rect x="10" y="5" width="4" height="1" fill="#FF0000"/><rect x="14" y="5" width="1" height="1" fill="#000000"/><rect x="2" y="6" width="5" height="1" fill="#000000"/><rect x="9" y="6" width="1" height="1" fill="#000000"/><rect x="10" y="6" width="3" height="1" fill="#FF0000"/><rect x="13" y="6" width="1" height="1" fill="#000000"/><rect x="4" y="7" width="1" height="1" fill="#000000"/><rect x="10" y="7" width="3" height="1" fill="#000000"/><rect x="2" y="8" width="12" height="1" fill="#000000"/><rect x="10" y="9" width="2" height="1" fill="#000000"/><rect x="10" y="10" width="2" height="1" fill="#000000"/><rect x="9" y="11" width="5" height="1" fill="#000000"/><rect x="9" y="12" width="5" height="1" fill="#000000"/></svg></div>
<div class="tb" style="left:192px;top:49px;width:23px;height:22px"><svg class="a" style="left:2px;top:2px" width="16" height="12" shape-rendering="crispEdges"><rect x="10" y="1" width="3" height="1" fill="#000000"/><rect x="9" y="2" width="1" height="1" fill="#000000"/><rect x="10" y="2" width="1" height="1" fill="#FFFF00"/><rect x="11" y="2" width="2" height="1" fill="#0000FF"/><rect x="13" y="2" width="1" height="1" fill="#000000"/><rect x="8" y="3" width="1" height="1" fill="#000000"/><rect x="9" y="3" width="2" height="1" fill="#FFFF00"/><rect x="11" y="3" width="3" height="1" fill="#0000FF"/><rect x="14" y="3" width="1" height="1" fill="#000000"/><rect x="2" y="4" width="5" height="1" fill="#000000"/><rect x="8" y="4" width="1" height="1" fill="#000000"/><rect x="9" y="4" width="3" height="1" fill="#FFFF00"/><rect x="12" y="4" width="2" height="1" fill="#0000FF"/><rect x="14" y="4" width="1" height="1" fill="#000000"/><rect x="2" y="5" width="1" height="1" fill="#000000"/><rect x="3" y="5" width="3" height="1" fill="#00FFFF"/><rect x="6" y="5" width="1" height="1" fill="#000000"/><rect x="8" y="5" width="1" height="1" fill="#000000"/><rect x="9" y="5" width="1" height="1" fill="#FFFF00"/><rect x="10" y="5" width="4" height="1" fill="#FF0000"/><rect x="14" y="5" width="1" height="1" fill="#000000"/><rect x="2" y="6" width="5" height="1" fill="#000000"/><rect x="9" y="6" width="1" height="1" fill="#000000"/><rect x="10" y="6" width="3" height="1" fill="#FF0000"/><rect x="13" y="6" width="1" height="1" fill="#000000"/><rect x="2" y="7" width="5" height="1" fill="#000000"/><rect x="10" y="7" width="3" height="1" fill="#000000"/><rect x="4" y="8" width="1" height="1" fill="#000000"/><rect x="2" y="9" width="5" height="1" fill="#000000"/><rect x="2" y="11" width="12" height="1" fill="#000000"/></svg></div>
<div class="tb" style="left:215px;top:49px;width:23px;height:22px"><svg class="a" style="left:2px;top:2px" width="16" height="13" shape-rendering="crispEdges"><rect x="2" y="2" width="5" height="1" fill="#808080"/><rect x="9" y="2" width="6" height="1" fill="#808080"/><rect x="2" y="3" width="5" height="1" fill="#808080"/><rect x="9" y="3" width="6" height="1" fill="#808080"/><rect x="2" y="4" width="5" height="1" fill="#808080"/><rect x="9" y="4" width="6" height="1" fill="#808080"/><rect x="2" y="6" width="5" height="1" fill="#808080"/><rect x="9" y="6" width="6" height="1" fill="#808080"/><rect x="2" y="7" width="5" height="1" fill="#808080"/><rect x="9" y="7" width="6" height="1" fill="#808080"/><rect x="2" y="8" width="5" height="1" fill="#808080"/><rect x="9" y="8" width="6" height="1" fill="#808080"/><rect x="2" y="10" width="5" height="1" fill="#808080"/><rect x="9" y="10" width="6" height="1" fill="#808080"/><rect x="2" y="11" width="5" height="1" fill="#808080"/><rect x="9" y="11" width="6" height="1" fill="#808080"/><rect x="2" y="12" width="5" height="1" fill="#808080"/><rect x="9" y="12" width="6" height="1" fill="#808080"/></svg></div>
<div class="tb" style="left:238px;top:49px;width:23px;height:22px"><svg class="a" style="left:2px;top:2px" width="16" height="14" shape-rendering="crispEdges"><rect x="4" y="2" width="4" height="1" fill="#FF0000"/><rect x="10" y="2" width="4" height="1" fill="#FF0000"/><rect x="2" y="3" width="1" height="1" fill="#0000FF"/><rect x="3" y="3" width="5" height="1" fill="#FF0000"/><rect x="8" y="3" width="1" height="1" fill="#0000FF"/><rect x="9" y="3" width="5" height="1" fill="#FF0000"/><rect x="2" y="4" width="1" height="1" fill="#0000FF"/><rect x="3" y="4" width="5" height="1" fill="#FF0000"/><rect x="8" y="4" width="2" height="1" fill="#0000FF"/><rect x="10" y="4" width="4" height="1" fill="#FF0000"/><rect x="2" y="5" width="2" height="1" fill="#0000FF"/><rect x="4" y="5" width="4" height="1" fill="#FF0000"/><rect x="8" y="5" width="2" height="1" fill="#0000FF"/><rect x="10" y="5" width="4" height="1" fill="#FF0000"/><rect x="2" y="6" width="2" height="1" fill="#0000FF"/><rect x="4" y="6" width="4" height="1" fill="#FF0000"/><rect x="8" y="6" width="2" height="1" fill="#0000FF"/><rect x="10" y="6" width="4" height="1" fill="#FF0000"/><rect x="0" y="7" width="16" height="1" fill="#0000FF"/><rect x="2" y="8" width="1" height="1" fill="#FF0000"/><rect x="3" y="8" width="2" height="1" fill="#0000FF"/><rect x="5" y="8" width="4" height="1" fill="#FF0000"/><rect x="9" y="8" width="2" height="1" fill="#0000FF"/><rect x="11" y="8" width="3" height="1" fill="#FF0000"/><rect x="3" y="9" width="2" height="1" fill="#0000FF"/><rect x="5" y="9" width="4" height="1" fill="#FF0000"/><rect x="9" y="9" width="2" height="1" fill="#0000FF"/><rect x="11" y="9" width="2" height="1" fill="#FF0000"/><rect x="4" y="10" width="2" height="1" fill="#0000FF"/><rect x="6" y="10" width="4" height="1" fill="#FF0000"/><rect x="10" y="10" width="1" height="1" fill="#0000FF"/><rect x="11" y="10" width="1" height="1" fill="#FF0000"/><rect x="5" y="11" width="1" height="1" fill="#0000FF"/><rect x="6" y="11" width="5" height="1" fill="#FF0000"/><rect x="6" y="12" width="4" height="1" fill="#FF0000"/><rect x="7" y="13" width="2" height="1" fill="#FF0000"/></svg></div>
<div class="tb" style="left:261px;top:49px;width:23px;height:22px"><svg class="a" style="left:2px;top:2px" width="16" height="14" shape-rendering="crispEdges"><rect x="0" y="0" width="11" height="1" fill="#000000"/><rect x="0" y="1" width="1" height="1" fill="#000000"/><rect x="10" y="1" width="1" height="1" fill="#FFFFFF"/><rect x="0" y="2" width="1" height="1" fill="#000000"/><rect x="2" y="2" width="6" height="1" fill="#FFFF00"/><rect x="10" y="2" width="1" height="1" fill="#FFFFFF"/><rect x="0" y="3" width="1" height="1" fill="#000000"/><rect x="2" y="3" width="2" height="1" fill="#FFFF00"/><rect x="10" y="3" width="1" height="1" fill="#FFFFFF"/><rect x="0" y="4" width="1" height="1" fill="#000000"/><rect x="2" y="4" width="2" height="1" fill="#FFFF00"/><rect x="10" y="4" width="1" height="1" fill="#FFFFFF"/><rect x="0" y="5" width="1" height="1" fill="#000000"/><rect x="1" y="5" width="5" height="1" fill="#FFFF00"/><rect x="10" y="5" width="1" height="1" fill="#FFFFFF"/><rect x="0" y="6" width="1" height="1" fill="#000000"/><rect x="2" y="6" width="3" height="1" fill="#FFFF00"/><rect x="10" y="6" width="1" height="1" fill="#FFFFFF"/><rect x="11" y="6" width="5" height="1" fill="#000000"/><rect x="0" y="7" width="1" height="1" fill="#000000"/><rect x="3" y="7" width="1" height="1" fill="#FFFF00"/><rect x="10" y="7" width="1" height="1" fill="#FFFFFF"/><rect x="12" y="7" width="3" height="1" fill="#000000"/><rect x="0" y="8" width="1" height="1" fill="#000000"/><rect x="2" y="8" width="7" height="1" fill="#000000"/><rect x="10" y="8" width="1" height="1" fill="#FFFFFF"/><rect x="13" y="8" width="1" height="1" fill="#000000"/><rect x="0" y="9" width="1" height="1" fill="#000000"/><rect x="4" y="9" width="3" height="1" fill="#000000"/><rect x="10" y="9" width="1" height="1" fill="#FFFFFF"/><rect x="0" y="10" width="1" height="1" fill="#000000"/><rect x="3" y="10" width="6" height="1" fill="#000000"/><rect x="10" y="10" width="1" height="1" fill="#FFFFFF"/><rect x="0" y="11" width="1" height="1" fill="#000000"/><rect x="3" y="11" width="6" height="1" fill="#000000"/><rect x="10" y="11" width="1" height="1" fill="#FFFFFF"/><rect x="0" y="12" width="1" height="1" fill="#000000"/><rect x="10" y="12" width="1" height="1" fill="#FFFFFF"/><rect x="0" y="13" width="1" height="1" fill="#000000"/><rect x="1" y="13" width="10" height="1" fill="#FFFFFF"/></svg></div>
<div class="tb" style="left:284px;top:49px;width:23px;height:22px"><svg class="a" style="left:2px;top:2px" width="16" height="14" shape-rendering="crispEdges"><rect x="2" y="1" width="6" height="1" fill="#000080"/><rect x="2" y="2" width="1" height="1" fill="#000080"/><rect x="3" y="2" width="4" height="1" fill="#00FFFF"/><rect x="7" y="2" width="2" height="1" fill="#000080"/><rect x="2" y="3" width="6" height="1" fill="#000080"/><rect x="9" y="3" width="1" height="1" fill="#000080"/><rect x="2" y="4" width="1" height="1" fill="#000080"/><rect x="3" y="4" width="4" height="1" fill="#FFFF00"/><rect x="7" y="4" width="1" height="1" fill="#000080"/><rect x="12" y="4" width="2" height="1" fill="#000000"/><rect x="2" y="5" width="6" height="1" fill="#000080"/><rect x="11" y="5" width="1" height="1" fill="#000000"/><rect x="12" y="5" width="2" height="1" fill="#00FFFF"/><rect x="14" y="5" width="1" height="1" fill="#000000"/><rect x="2" y="6" width="1" height="1" fill="#000080"/><rect x="3" y="6" width="4" height="1" fill="#FFFF00"/><rect x="7" y="6" width="1" height="1" fill="#000080"/><rect x="10" y="6" width="1" height="1" fill="#000000"/><rect x="11" y="6" width="2" height="1" fill="#00FFFF"/><rect x="13" y="6" width="2" height="1" fill="#FFFF00"/><rect x="15" y="6" width="1" height="1" fill="#000000"/><rect x="2" y="7" width="6" height="1" fill="#000080"/><rect x="10" y="7" width="1" height="1" fill="#000000"/><rect x="11" y="7" width="1" height="1" fill="#00FFFF"/><rect x="12" y="7" width="3" height="1" fill="#FFFF00"/><rect x="15" y="7" width="1" height="1" fill="#000000"/><rect x="2" y="8" width="1" height="1" fill="#000080"/><rect x="3" y="8" width="4" height="1" fill="#00FFFF"/><rect x="7" y="8" width="1" height="1" fill="#000080"/><rect x="11" y="8" width="1" height="1" fill="#000000"/><rect x="12" y="8" width="2" height="1" fill="#FFFF00"/><rect x="14" y="8" width="1" height="1" fill="#000000"/><rect x="2" y="9" width="6" height="1" fill="#000080"/><rect x="12" y="9" width="2" height="1" fill="#000000"/><rect x="2" y="10" width="1" height="1" fill="#000080"/><rect x="3" y="10" width="4" height="1" fill="#FFFF00"/><rect x="7" y="10" width="1" height="1" fill="#000080"/><rect x="9" y="10" width="1" height="1" fill="#000080"/><rect x="2" y="11" width="7" height="1" fill="#000080"/><rect x="2" y="12" width="1" height="1" fill="#000080"/><rect x="3" y="12" width="4" height="1" fill="#00FFFF"/><rect x="7" y="12" width="1" height="1" fill="#000080"/><rect x="2" y="13" width="6" height="1" fill="#000080"/></svg></div>
<div class="tb" style="left:307px;top:49px;width:23px;height:22px"><svg class="a" style="left:2px;top:2px" width="16" height="14" shape-rendering="crispEdges"><rect x="3" y="1" width="1" height="1" fill="#0000FF"/><rect x="2" y="2" width="1" height="1" fill="#808000"/><rect x="3" y="2" width="1" height="1" fill="#0000FF"/><rect x="2" y="3" width="1" height="1" fill="#808000"/><rect x="3" y="3" width="1" height="1" fill="#0000FF"/><rect x="2" y="4" width="3" height="1" fill="#0000FF"/><rect x="1" y="5" width="1" height="1" fill="#808000"/><rect x="2" y="5" width="1" height="1" fill="#0000FF"/><rect x="4" y="5" width="1" height="1" fill="#0000FF"/><rect x="1" y="6" width="1" height="1" fill="#808000"/><rect x="2" y="6" width="1" height="1" fill="#0000FF"/><rect x="4" y="6" width="1" height="1" fill="#808000"/><rect x="5" y="6" width="1" height="1" fill="#0000FF"/><rect x="9" y="6" width="1" height="1" fill="#808000"/><rect x="10" y="6" width="1" height="1" fill="#0000FF"/><rect x="1" y="7" width="1" height="1" fill="#808000"/><rect x="2" y="7" width="1" height="1" fill="#0000FF"/><rect x="4" y="7" width="1" height="1" fill="#808000"/><rect x="5" y="7" width="1" height="1" fill="#0000FF"/><rect x="9" y="7" width="3" height="1" fill="#0000FF"/><rect x="1" y="8" width="1" height="1" fill="#808000"/><rect x="2" y="8" width="1" height="1" fill="#0000FF"/><rect x="4" y="8" width="1" height="1" fill="#808000"/><rect x="5" y="8" width="1" height="1" fill="#0000FF"/><rect x="8" y="8" width="1" height="1" fill="#808000"/><rect x="9" y="8" width="1" height="1" fill="#0000FF"/><rect x="11" y="8" width="1" height="1" fill="#0000FF"/><rect x="1" y="9" width="1" height="1" fill="#808000"/><rect x="2" y="9" width="1" height="1" fill="#0000FF"/><rect x="4" y="9" width="1" height="1" fill="#808000"/><rect x="5" y="9" width="1" height="1" fill="#0000FF"/><rect x="8" y="9" width="1" height="1" fill="#808000"/><rect x="9" y="9" width="1" height="1" fill="#0000FF"/><rect x="11" y="9" width="1" height="1" fill="#0000FF"/><rect x="0" y="10" width="1" height="1" fill="#808000"/><rect x="1" y="10" width="2" height="1" fill="#0000FF"/><rect x="4" y="10" width="1" height="1" fill="#808000"/><rect x="5" y="10" width="1" height="1" fill="#0000FF"/><rect x="7" y="10" width="1" height="1" fill="#808000"/><rect x="8" y="10" width="2" height="1" fill="#0000FF"/><rect x="11" y="10" width="1" height="1" fill="#0000FF"/><rect x="12" y="10" width="1" height="1" fill="#808000"/><rect x="14" y="10" width="1" height="1" fill="#808000"/><rect x="0" y="11" width="1" height="1" fill="#808000"/><rect x="1" y="11" width="1" height="1" fill="#0000FF"/><rect x="4" y="11" width="1" height="1" fill="#808000"/><rect x="5" y="11" width="1" height="1" fill="#0000FF"/><rect x="7" y="11" width="1" height="1" fill="#808000"/><rect x="8" y="11" width="1" height="1" fill="#0000FF"/><rect x="11" y="11" width="1" height="1" fill="#0000FF"/><rect x="12" y="11" width="1" height="1" fill="#808000"/><rect x="13" y="11" width="3" height="1" fill="#0000FF"/><rect x="0" y="12" width="1" height="1" fill="#808000"/><rect x="1" y="12" width="1" height="1" fill="#0000FF"/><rect x="4" y="12" width="1" height="1" fill="#808000"/><rect x="5" y="12" width="1" height="1" fill="#0000FF"/><rect x="7" y="12" width="2" height="1" fill="#0000FF"/><rect x="11" y="12" width="1" height="1" fill="#808000"/><rect x="12" y="12" width="2" height="1" fill="#0000FF"/><rect x="15" y="12" width="1" height="1" fill="#0000FF"/><rect x="0" y="13" width="1" height="1" fill="#0000FF"/><rect x="4" y="13" width="2" height="1" fill="#0000FF"/><rect x="7" y="13" width="1" height="1" fill="#0000FF"/><rect x="12" y="13" width="2" height="1" fill="#0000FF"/><rect x="15" y="13" width="1" height="1" fill="#0000FF"/></svg></div>
<div class="tb" style="left:330px;top:49px;width:23px;height:22px"><svg class="a" style="left:2px;top:2px" width="16" height="13" shape-rendering="crispEdges"><rect x="0" y="0" width="8" height="1" fill="#000000"/><rect x="0" y="1" width="7" height="1" fill="#FFFF00"/><rect x="7" y="1" width="1" height="1" fill="#000000"/><rect x="0" y="2" width="6" height="1" fill="#000000"/><rect x="6" y="2" width="1" height="1" fill="#FFFF00"/><rect x="7" y="2" width="1" height="1" fill="#000000"/><rect x="5" y="3" width="1" height="1" fill="#000000"/><rect x="6" y="3" width="1" height="1" fill="#FFFF00"/><rect x="7" y="3" width="1" height="1" fill="#000000"/><rect x="4" y="4" width="1" height="1" fill="#000000"/><rect x="5" y="4" width="3" height="1" fill="#FFFF00"/><rect x="8" y="4" width="1" height="1" fill="#000000"/><rect x="5" y="5" width="1" height="1" fill="#000000"/><rect x="6" y="5" width="1" height="1" fill="#FFFF00"/><rect x="7" y="5" width="1" height="1" fill="#000000"/><rect x="2" y="6" width="12" height="1" fill="#000000"/><rect x="1" y="7" width="1" height="1" fill="#000000"/><rect x="2" y="7" width="12" height="1" fill="#FFFFFF"/><rect x="14" y="7" width="1" height="1" fill="#000000"/><rect x="0" y="8" width="1" height="1" fill="#000000"/><rect x="1" y="8" width="13" height="1" fill="#FFFFFF"/><rect x="14" y="8" width="2" height="1" fill="#000000"/><rect x="0" y="9" width="1" height="1" fill="#000000"/><rect x="1" y="9" width="10" height="1" fill="#C0C0C0"/><rect x="11" y="9" width="2" height="1" fill="#00FF00"/><rect x="13" y="9" width="1" height="1" fill="#C0C0C0"/><rect x="14" y="9" width="2" height="1" fill="#000000"/><rect x="0" y="10" width="1" height="1" fill="#000000"/><rect x="1" y="10" width="1" height="1" fill="#C0C0C0"/><rect x="2" y="10" width="8" height="1" fill="#000000"/><rect x="10" y="10" width="4" height="1" fill="#C0C0C0"/><rect x="14" y="10" width="2" height="1" fill="#000000"/><rect x="0" y="11" width="1" height="1" fill="#000000"/><rect x="1" y="11" width="13" height="1" fill="#C0C0C0"/><rect x="14" y="11" width="2" height="1" fill="#000000"/><rect x="1" y="12" width="14" height="1" fill="#000000"/></svg></div>
<div class="tb" style="left:353px;top:49px;width:23px;height:22px"><svg class="a" style="left:2px;top:2px" width="16" height="13" shape-rendering="crispEdges"><rect x="1" y="1" width="6" height="1" fill="#808080"/><rect x="8" y="1" width="8" height="1" fill="#808080"/><rect x="1" y="2" width="6" height="1" fill="#808080"/><rect x="8" y="2" width="8" height="1" fill="#808080"/><rect x="1" y="3" width="6" height="1" fill="#808080"/><rect x="8" y="3" width="8" height="1" fill="#808080"/><rect x="8" y="4" width="8" height="1" fill="#808080"/><rect x="1" y="5" width="6" height="1" fill="#808080"/><rect x="8" y="5" width="8" height="1" fill="#808080"/><rect x="1" y="6" width="6" height="1" fill="#808080"/><rect x="8" y="6" width="8" height="1" fill="#808080"/><rect x="1" y="7" width="6" height="1" fill="#808080"/><rect x="8" y="7" width="8" height="1" fill="#808080"/><rect x="2" y="9" width="1" height="1" fill="#808080"/><rect x="6" y="9" width="1" height="1" fill="#808080"/><rect x="10" y="9" width="1" height="1" fill="#808080"/><rect x="12" y="9" width="3" height="1" fill="#808080"/><rect x="2" y="10" width="1" height="1" fill="#808080"/><rect x="6" y="10" width="2" height="1" fill="#808080"/><rect x="9" y="10" width="2" height="1" fill="#808080"/><rect x="13" y="10" width="1" height="1" fill="#808080"/><rect x="2" y="11" width="1" height="1" fill="#808080"/><rect x="6" y="11" width="1" height="1" fill="#808080"/><rect x="8" y="11" width="1" height="1" fill="#808080"/><rect x="10" y="11" width="1" height="1" fill="#808080"/><rect x="13" y="11" width="1" height="1" fill="#808080"/><rect x="2" y="12" width="3" height="1" fill="#808080"/><rect x="6" y="12" width="1" height="1" fill="#808080"/><rect x="10" y="12" width="1" height="1" fill="#808080"/><rect x="12" y="12" width="3" height="1" fill="#808080"/></svg></div>
<div class="tb" style="left:376px;top:49px;width:23px;height:22px"><svg class="a" style="left:2px;top:2px" width="16" height="13" shape-rendering="crispEdges"><rect x="7" y="0" width="2" height="1" fill="#808080"/><rect x="7" y="1" width="2" height="1" fill="#808080"/><rect x="7" y="2" width="2" height="1" fill="#808080"/><rect x="5" y="3" width="6" height="1" fill="#808080"/><rect x="6" y="4" width="4" height="1" fill="#808080"/><rect x="7" y="5" width="2" height="1" fill="#808080"/><rect x="0" y="7" width="16" height="1" fill="#808080"/><rect x="0" y="8" width="16" height="1" fill="#808080"/><rect x="0" y="9" width="1" height="1" fill="#808080"/><rect x="2" y="9" width="1" height="1" fill="#FFFFFF"/><rect x="4" y="9" width="1" height="1" fill="#808080"/><rect x="6" y="9" width="1" height="1" fill="#FFFFFF"/><rect x="8" y="9" width="1" height="1" fill="#808080"/><rect x="10" y="9" width="1" height="1" fill="#FFFFFF"/><rect x="12" y="9" width="1" height="1" fill="#808080"/><rect x="14" y="9" width="1" height="1" fill="#FFFFFF"/><rect x="0" y="10" width="3" height="1" fill="#808080"/><rect x="4" y="10" width="3" height="1" fill="#808080"/><rect x="8" y="10" width="3" height="1" fill="#808080"/><rect x="12" y="10" width="3" height="1" fill="#808080"/><rect x="0" y="11" width="3" height="1" fill="#808080"/><rect x="4" y="11" width="3" height="1" fill="#808080"/><rect x="8" y="11" width="3" height="1" fill="#808080"/><rect x="12" y="11" width="3" height="1" fill="#808080"/><rect x="0" y="12" width="3" height="1" fill="#808080"/><rect x="4" y="12" width="3" height="1" fill="#808080"/><rect x="8" y="12" width="3" height="1" fill="#808080"/><rect x="12" y="12" width="3" height="1" fill="#808080"/></svg></div>
<div class="tb" style="left:399px;top:49px;width:23px;height:22px"><svg class="a" style="left:2px;top:2px" width="16" height="14" shape-rendering="crispEdges"><rect x="5" y="2" width="2" height="1" fill="#808080"/><rect x="8" y="2" width="2" height="1" fill="#808080"/><rect x="3" y="3" width="10" height="1" fill="#808080"/><rect x="3" y="4" width="10" height="1" fill="#808080"/><rect x="13" y="4" width="1" height="1" fill="#FFFFFF"/><rect x="3" y="5" width="10" height="1" fill="#808080"/><rect x="13" y="5" width="1" height="1" fill="#FFFFFF"/><rect x="3" y="6" width="10" height="1" fill="#808080"/><rect x="13" y="6" width="1" height="1" fill="#FFFFFF"/><rect x="3" y="7" width="10" height="1" fill="#808080"/><rect x="13" y="7" width="1" height="1" fill="#FFFFFF"/><rect x="3" y="8" width="10" height="1" fill="#808080"/><rect x="13" y="8" width="1" height="1" fill="#FFFFFF"/><rect x="3" y="9" width="10" height="1" fill="#808080"/><rect x="13" y="9" width="1" height="1" fill="#FFFFFF"/><rect x="4" y="10" width="9" height="1" fill="#808080"/><rect x="13" y="10" width="1" height="1" fill="#FFFFFF"/><rect x="5" y="11" width="7" height="1" fill="#808080"/><rect x="12" y="11" width="1" height="1" fill="#FFFFFF"/><rect x="6" y="12" width="6" height="1" fill="#808080"/><rect x="12" y="12" width="1" height="1" fill="#FFFFFF"/><rect x="7" y="13" width="5" height="1" fill="#FFFFFF"/></svg></div>
<div class="tb" style="left:422px;top:49px;width:23px;height:22px"><svg class="a" style="left:2px;top:2px" width="16" height="15" shape-rendering="crispEdges"><rect x="0" y="0" width="16" height="1" fill="#000000"/><rect x="0" y="1" width="1" height="1" fill="#000000"/><rect x="15" y="1" width="1" height="1" fill="#000000"/><rect x="0" y="2" width="1" height="1" fill="#000000"/><rect x="2" y="2" width="2" height="1" fill="#000080"/><rect x="5" y="2" width="5" height="1" fill="#000080"/><rect x="11" y="2" width="3" height="1" fill="#000080"/><rect x="15" y="2" width="1" height="1" fill="#000000"/><rect x="0" y="3" width="1" height="1" fill="#000000"/><rect x="15" y="3" width="1" height="1" fill="#000000"/><rect x="0" y="4" width="1" height="1" fill="#000000"/><rect x="2" y="4" width="2" height="1" fill="#000080"/><rect x="5" y="4" width="5" height="1" fill="#000080"/><rect x="11" y="4" width="4" height="1" fill="#000080"/><rect x="15" y="4" width="1" height="1" fill="#000000"/><rect x="0" y="5" width="1" height="1" fill="#000000"/><rect x="15" y="5" width="1" height="1" fill="#000000"/><rect x="0" y="6" width="1" height="1" fill="#000000"/><rect x="2" y="6" width="2" height="1" fill="#000080"/><rect x="5" y="6" width="4" height="1" fill="#000080"/><rect x="11" y="6" width="3" height="1" fill="#000080"/><rect x="15" y="6" width="1" height="1" fill="#000000"/><rect x="0" y="7" width="1" height="1" fill="#000000"/><rect x="15" y="7" width="1" height="1" fill="#000000"/><rect x="0" y="8" width="16" height="1" fill="#000000"/><rect x="0" y="9" width="1" height="1" fill="#000000"/><rect x="15" y="9" width="1" height="1" fill="#000000"/><rect x="0" y="10" width="1" height="1" fill="#000000"/><rect x="2" y="10" width="2" height="1" fill="#000080"/><rect x="5" y="10" width="2" height="1" fill="#000080"/><rect x="8" y="10" width="2" height="1" fill="#000080"/><rect x="11" y="10" width="2" height="1" fill="#000080"/><rect x="15" y="10" width="1" height="1" fill="#000000"/><rect x="0" y="11" width="1" height="1" fill="#000000"/><rect x="15" y="11" width="1" height="1" fill="#000000"/><rect x="0" y="12" width="1" height="1" fill="#000000"/><rect x="2" y="12" width="2" height="1" fill="#000080"/><rect x="5" y="12" width="4" height="1" fill="#000080"/><rect x="10" y="12" width="4" height="1" fill="#000080"/><rect x="15" y="12" width="1" height="1" fill="#000000"/><rect x="0" y="13" width="1" height="1" fill="#000000"/><rect x="15" y="13" width="1" height="1" fill="#000000"/><rect x="0" y="14" width="16" height="1" fill="#000000"/></svg></div>
<div class="tb" style="left:453px;top:49px;width:23px;height:22px"><svg class="a" style="left:2px;top:2px" width="16" height="13" shape-rendering="crispEdges"><rect x="2" y="2" width="2" height="1" fill="#000080"/><rect x="2" y="3" width="1" height="1" fill="#000080"/><rect x="3" y="3" width="1" height="1" fill="#FFFFFF"/><rect x="4" y="3" width="1" height="1" fill="#000080"/><rect x="2" y="4" width="4" height="1" fill="#000080"/><rect x="3" y="5" width="4" height="1" fill="#000080"/><rect x="4" y="6" width="4" height="1" fill="#000080"/><rect x="6" y="7" width="8" height="1" fill="#000080"/><rect x="7" y="8" width="3" height="1" fill="#000080"/><rect x="12" y="8" width="2" height="1" fill="#000080"/><rect x="7" y="9" width="2" height="1" fill="#000080"/><rect x="12" y="9" width="2" height="1" fill="#000080"/><rect x="7" y="10" width="3" height="1" fill="#000080"/><rect x="12" y="10" width="2" height="1" fill="#000080"/><rect x="8" y="11" width="3" height="1" fill="#000080"/><rect x="12" y="11" width="2" height="1" fill="#000080"/><rect x="8" y="12" width="3" height="1" fill="#000080"/></svg></div>
<div class="tb" style="left:482px;top:49px;width:23px;height:22px"><svg class="a" style="left:2px;top:2px" width="16" height="15" shape-rendering="crispEdges"><rect x="2" y="1" width="2" height="1" fill="#00FF00"/><rect x="7" y="1" width="2" height="1" fill="#00FF00"/><rect x="12" y="1" width="2" height="1" fill="#00FF00"/><rect x="1" y="2" width="4" height="1" fill="#00FF00"/><rect x="6" y="2" width="4" height="1" fill="#00FF00"/><rect x="11" y="2" width="4" height="1" fill="#00FF00"/><rect x="2" y="3" width="2" height="1" fill="#00FF00"/><rect x="7" y="3" width="2" height="1" fill="#00FF00"/><rect x="12" y="3" width="2" height="1" fill="#00FF00"/><rect x="7" y="4" width="2" height="1" fill="#0000FF"/><rect x="6" y="5" width="1" height="1" fill="#0000FF"/><rect x="9" y="5" width="1" height="1" fill="#0000FF"/><rect x="2" y="6" width="2" height="1" fill="#00FF00"/><rect x="5" y="6" width="1" height="1" fill="#0000FF"/><rect x="7" y="6" width="2" height="1" fill="#FF0000"/><rect x="10" y="6" width="1" height="1" fill="#0000FF"/><rect x="12" y="6" width="2" height="1" fill="#00FF00"/><rect x="1" y="7" width="4" height="1" fill="#00FF00"/><rect x="5" y="7" width="1" height="1" fill="#0000FF"/><rect x="6" y="7" width="4" height="1" fill="#FF0000"/><rect x="10" y="7" width="1" height="1" fill="#0000FF"/><rect x="11" y="7" width="4" height="1" fill="#00FF00"/><rect x="2" y="8" width="2" height="1" fill="#00FF00"/><rect x="5" y="8" width="1" height="1" fill="#0000FF"/><rect x="7" y="8" width="2" height="1" fill="#FF0000"/><rect x="10" y="8" width="1" height="1" fill="#0000FF"/><rect x="12" y="8" width="2" height="1" fill="#00FF00"/><rect x="6" y="9" width="1" height="1" fill="#0000FF"/><rect x="9" y="9" width="2" height="1" fill="#0000FF"/><rect x="7" y="10" width="2" height="1" fill="#0000FF"/><rect x="10" y="10" width="2" height="1" fill="#0000FF"/><rect x="2" y="11" width="2" height="1" fill="#FF0000"/><rect x="7" y="11" width="2" height="1" fill="#00FF00"/><rect x="11" y="11" width="2" height="1" fill="#0000FF"/><rect x="1" y="12" width="4" height="1" fill="#FF0000"/><rect x="6" y="12" width="4" height="1" fill="#00FF00"/><rect x="12" y="12" width="2" height="1" fill="#0000FF"/><rect x="2" y="13" width="2" height="1" fill="#FF0000"/><rect x="7" y="13" width="2" height="1" fill="#00FF00"/><rect x="13" y="13" width="2" height="1" fill="#0000FF"/></svg></div>
<div class="sep" style="left:2px;top:74px;width:748px"></div>
<div class="sunk" style="left:9px;top:77px;width:101px;height:21px"><div class="a" style="left:0;top:0;width:99px;height:19px;border-top:1px solid #404040;border-left:1px solid #404040"></div><div class="t" style="left:2px;top:1px">17:13:53.99999800</div></div>
<div class="tb gbtn" style="left:123px;top:77px;width:21px;height:21px"><svg class="a" style="left:4px;top:4px" width="12" height="11" shape-rendering="crispEdges"><rect x="0" y="1" width="2" height="9" fill="#000"/><path d="M2 5.5L10 0V11Z" fill="#000" shape-rendering="auto"/></svg></div>
<div class="tb" style="left:148px;top:77px;width:16px;height:21px"><svg class="a" style="left:5px;top:6px" width="4" height="7" shape-rendering="crispEdges"><path d="M3 0h1v7h-1zM2 1h1v5h-1zM1 2h1v3h-1zM0 3h1v1h-1z" fill="#000"/></svg></div>
<div class="a" style="left:164px;top:76px;width:99px;height:23px;background-color:#fff;background-image:linear-gradient(45deg,#D4D0C8 25%,transparent 25%,transparent 75%,#D4D0C8 75%),linear-gradient(45deg,#D4D0C8 25%,transparent 25%,transparent 75%,#D4D0C8 75%);background-size:2px 2px;background-position:0 0,1px 1px"></div>
<div class="tb" style="left:263px;top:77px;width:16px;height:21px"></div>
<div class="tb" style="left:279px;top:77px;width:16px;height:21px"><svg class="a" style="left:6px;top:6px" width="4" height="7" shape-rendering="crispEdges"><path d="M0 0h1v7h-1zM1 1h1v5h-1zM2 2h1v3h-1zM3 3h1v1h-1z" fill="#000"/></svg></div>
<div class="tb gbtn" style="left:300px;top:77px;width:21px;height:21px"><svg class="a" style="left:4px;top:4px" width="13" height="12" shape-rendering="crispEdges"><path d="M0 0L8 5.5L0 11Z" fill="#808080" shape-rendering="auto"/><rect x="8" y="0" width="2" height="11" fill="#808080"/><path d="M1 11L9 6" stroke="#fff"/><rect x="10" y="1" width="1" height="11" fill="#fff"/></svg></div>
<div class="tb" style="left:339px;top:77px;width:44px;height:20px"><div class="t" style="left:1px;top:3px">Rec #...</div></div>
<div class="tb" style="left:390px;top:77px;width:44px;height:20px"><div class="t" style="left:6px;top:3px">Time...</div></div>
<div class="sunk" style="left:454px;top:77px;width:164px;height:21px"><div class="a" style="left:0;top:0;width:162px;height:19px;border:1px solid #000"><div class="a" style="left:0;top:0;width:9px;height:17px;background:#00FFFF"></div><div class="t" style="left:0;top:2px;width:160px;text-align:center;font-weight:bold;font-size:14px;line-height:15px">32 MB</div></div></div>
<div class="sep" style="left:2px;top:100px;width:748px"></div>
<div class="tb" style="left:10px;top:105px;width:23px;height:22px"><svg class="a" style="left:2px;top:2px" width="16" height="15" shape-rendering="crispEdges"><rect x="1" y="0" width="14" height="1" fill="#000000"/><rect x="1" y="1" width="6" height="1" fill="#000000"/><rect x="7" y="1" width="2" height="1" fill="#808080"/><rect x="9" y="1" width="6" height="1" fill="#000000"/><rect x="1" y="2" width="5" height="1" fill="#000000"/><rect x="6" y="2" width="4" height="1" fill="#808080"/><rect x="10" y="2" width="5" height="1" fill="#000000"/><rect x="1" y="3" width="6" height="1" fill="#000000"/><rect x="7" y="3" width="2" height="1" fill="#808080"/><rect x="9" y="3" width="6" height="1" fill="#000000"/><rect x="1" y="4" width="14" height="1" fill="#000000"/><rect x="1" y="5" width="6" height="1" fill="#000000"/><rect x="7" y="5" width="2" height="1" fill="#808080"/><rect x="9" y="5" width="6" height="1" fill="#000000"/><rect x="1" y="6" width="5" height="1" fill="#000000"/><rect x="6" y="6" width="4" height="1" fill="#808080"/><rect x="10" y="6" width="5" height="1" fill="#000000"/><rect x="1" y="7" width="6" height="1" fill="#000000"/><rect x="7" y="7" width="2" height="1" fill="#808080"/><rect x="9" y="7" width="6" height="1" fill="#000000"/><rect x="1" y="8" width="14" height="1" fill="#000000"/><rect x="1" y="9" width="6" height="1" fill="#000000"/><rect x="7" y="9" width="2" height="1" fill="#00FF00"/><rect x="9" y="9" width="6" height="1" fill="#000000"/><rect x="1" y="10" width="5" height="1" fill="#000000"/><rect x="6" y="10" width="4" height="1" fill="#00FF00"/><rect x="10" y="10" width="5" height="1" fill="#000000"/><rect x="1" y="11" width="5" height="1" fill="#000000"/><rect x="6" y="11" width="4" height="1" fill="#00FF00"/><rect x="10" y="11" width="5" height="1" fill="#000000"/><rect x="1" y="12" width="6" height="1" fill="#000000"/><rect x="7" y="12" width="2" height="1" fill="#00FF00"/><rect x="9" y="12" width="6" height="1" fill="#000000"/><rect x="1" y="13" width="14" height="1" fill="#000000"/><rect x="1" y="14" width="14" height="1" fill="#000000"/></svg></div>
<div class="tb" style="left:41px;top:105px;width:23px;height:22px"><svg class="a" style="left:2px;top:2px" width="16" height="14" shape-rendering="crispEdges"><rect x="5" y="1" width="5" height="1" fill="#000080"/><rect x="3" y="2" width="2" height="1" fill="#000080"/><rect x="10" y="2" width="2" height="1" fill="#000080"/><rect x="2" y="3" width="1" height="1" fill="#000080"/><rect x="12" y="3" width="1" height="1" fill="#000080"/><rect x="2" y="4" width="1" height="1" fill="#000080"/><rect x="10" y="4" width="5" height="1" fill="#000080"/><rect x="2" y="5" width="1" height="1" fill="#000080"/><rect x="11" y="5" width="3" height="1" fill="#000080"/><rect x="12" y="6" width="1" height="1" fill="#000080"/><rect x="3" y="8" width="1" height="1" fill="#000080"/><rect x="2" y="9" width="3" height="1" fill="#000080"/><rect x="13" y="9" width="1" height="1" fill="#000080"/><rect x="1" y="10" width="5" height="1" fill="#000080"/><rect x="13" y="10" width="1" height="1" fill="#000080"/><rect x="3" y="11" width="1" height="1" fill="#000080"/><rect x="13" y="11" width="1" height="1" fill="#000080"/><rect x="4" y="12" width="2" height="1" fill="#000080"/><rect x="11" y="12" width="2" height="1" fill="#000080"/><rect x="6" y="13" width="5" height="1" fill="#000080"/></svg></div>
<div class="tb" style="left:64px;top:105px;width:23px;height:22px"><svg class="a" style="left:3px;top:2px" width="16" height="13" shape-rendering="crispEdges"><rect x="6" y="2" width="2" height="1" fill="#000080"/><rect x="6" y="3" width="3" height="1" fill="#000080"/><rect x="6" y="4" width="4" height="1" fill="#000080"/><rect x="2" y="5" width="9" height="1" fill="#000080"/><rect x="2" y="6" width="10" height="1" fill="#000080"/><rect x="2" y="7" width="11" height="1" fill="#000080"/><rect x="2" y="8" width="10" height="1" fill="#000080"/><rect x="2" y="9" width="9" height="1" fill="#000080"/><rect x="6" y="10" width="4" height="1" fill="#000080"/><rect x="6" y="11" width="3" height="1" fill="#000080"/><rect x="6" y="12" width="2" height="1" fill="#000080"/></svg></div>
<div class="tbp" style="left:95px;top:105px;width:23px;height:22px"><svg class="a" style="left:3px;top:3px" width="16" height="13" shape-rendering="crispEdges"><rect x="1" y="0" width="14" height="1" fill="#000000"/><rect x="1" y="1" width="1" height="1" fill="#000000"/><rect x="2" y="1" width="2" height="1" fill="#0000FF"/><rect x="4" y="1" width="1" height="1" fill="#FFFFFF"/><rect x="5" y="1" width="1" height="1" fill="#000000"/><rect x="6" y="1" width="3" height="1" fill="#FF0000"/><rect x="9" y="1" width="1" height="1" fill="#000000"/><rect x="10" y="1" width="3" height="1" fill="#00FF00"/><rect x="13" y="1" width="1" height="1" fill="#FFFFFF"/><rect x="14" y="1" width="1" height="1" fill="#000000"/><rect x="1" y="2" width="1" height="1" fill="#000000"/><rect x="2" y="2" width="2" height="1" fill="#0000FF"/><rect x="4" y="2" width="1" height="1" fill="#FFFFFF"/><rect x="5" y="2" width="1" height="1" fill="#000000"/><rect x="6" y="2" width="3" height="1" fill="#FF0000"/><rect x="9" y="2" width="1" height="1" fill="#000000"/><rect x="10" y="2" width="3" height="1" fill="#00FF00"/><rect x="13" y="2" width="1" height="1" fill="#FFFFFF"/><rect x="14" y="2" width="1" height="1" fill="#000000"/><rect x="1" y="3" width="14" height="1" fill="#000000"/><rect x="1" y="4" width="1" height="1" fill="#000000"/><rect x="2" y="4" width="2" height="1" fill="#0000FF"/><rect x="4" y="4" width="1" height="1" fill="#FFFFFF"/><rect x="5" y="4" width="1" height="1" fill="#000000"/><rect x="6" y="4" width="3" height="1" fill="#FF0000"/><rect x="9" y="4" width="1" height="1" fill="#000000"/><rect x="10" y="4" width="3" height="1" fill="#00FF00"/><rect x="13" y="4" width="1" height="1" fill="#FFFFFF"/><rect x="14" y="4" width="1" height="1" fill="#000000"/><rect x="1" y="5" width="1" height="1" fill="#000000"/><rect x="2" y="5" width="2" height="1" fill="#0000FF"/><rect x="4" y="5" width="1" height="1" fill="#FFFFFF"/><rect x="5" y="5" width="1" height="1" fill="#000000"/><rect x="6" y="5" width="3" height="1" fill="#FF0000"/><rect x="9" y="5" width="1" height="1" fill="#000000"/><rect x="10" y="5" width="3" height="1" fill="#00FF00"/><rect x="13" y="5" width="1" height="1" fill="#FFFFFF"/><rect x="14" y="5" width="1" height="1" fill="#000000"/><rect x="1" y="6" width="14" height="1" fill="#000000"/><rect x="1" y="7" width="1" height="1" fill="#000000"/><rect x="2" y="7" width="3" height="1" fill="#FFFFFF"/><rect x="5" y="7" width="1" height="1" fill="#000000"/><rect x="6" y="7" width="3" height="1" fill="#FF0000"/><rect x="9" y="7" width="1" height="1" fill="#000000"/><rect x="10" y="7" width="4" height="1" fill="#FFFFFF"/><rect x="14" y="7" width="1" height="1" fill="#000000"/><rect x="1" y="8" width="1" height="1" fill="#000000"/><rect x="2" y="8" width="3" height="1" fill="#FFFFFF"/><rect x="5" y="8" width="1" height="1" fill="#000000"/><rect x="6" y="8" width="3" height="1" fill="#FF0000"/><rect x="9" y="8" width="1" height="1" fill="#000000"/><rect x="10" y="8" width="4" height="1" fill="#FFFFFF"/><rect x="14" y="8" width="1" height="1" fill="#000000"/><rect x="1" y="9" width="14" height="1" fill="#000000"/><rect x="1" y="10" width="1" height="1" fill="#000000"/><rect x="2" y="10" width="2" height="1" fill="#0000FF"/><rect x="4" y="10" width="1" height="1" fill="#FFFFFF"/><rect x="5" y="10" width="1" height="1" fill="#000000"/><rect x="6" y="10" width="3" height="1" fill="#FF0000"/><rect x="9" y="10" width="1" height="1" fill="#000000"/><rect x="10" y="10" width="3" height="1" fill="#00FF00"/><rect x="13" y="10" width="1" height="1" fill="#FFFFFF"/><rect x="14" y="10" width="1" height="1" fill="#000000"/><rect x="1" y="11" width="1" height="1" fill="#000000"/><rect x="2" y="11" width="2" height="1" fill="#0000FF"/><rect x="4" y="11" width="1" height="1" fill="#FFFFFF"/><rect x="5" y="11" width="1" height="1" fill="#000000"/><rect x="6" y="11" width="3" height="1" fill="#FF0000"/><rect x="9" y="11" width="1" height="1" fill="#000000"/><rect x="10" y="11" width="3" height="1" fill="#00FF00"/><rect x="13" y="11" width="1" height="1" fill="#FFFFFF"/><rect x="14" y="11" width="1" height="1" fill="#000000"/><rect x="1" y="12" width="14" height="1" fill="#000000"/></svg></div>
<div class="tbp" style="left:118px;top:105px;width:23px;height:22px"><svg class="a" style="left:3px;top:3px" width="16" height="15" shape-rendering="crispEdges"><rect x="0" y="0" width="16" height="1" fill="#000000"/><rect x="0" y="1" width="1" height="1" fill="#000000"/><rect x="1" y="1" width="14" height="1" fill="#FFFFFF"/><rect x="15" y="1" width="1" height="1" fill="#000000"/><rect x="0" y="2" width="1" height="1" fill="#000000"/><rect x="1" y="2" width="1" height="1" fill="#FFFFFF"/><rect x="2" y="2" width="1" height="1" fill="#0000FF"/><rect x="3" y="2" width="1" height="1" fill="#FFFFFF"/><rect x="4" y="2" width="1" height="1" fill="#0000FF"/><rect x="5" y="2" width="7" height="1" fill="#FFFFFF"/><rect x="12" y="2" width="1" height="1" fill="#0000FF"/><rect x="13" y="2" width="2" height="1" fill="#FFFFFF"/><rect x="15" y="2" width="1" height="1" fill="#000000"/><rect x="0" y="3" width="1" height="1" fill="#000000"/><rect x="1" y="3" width="1" height="1" fill="#FFFFFF"/><rect x="2" y="3" width="1" height="1" fill="#0000FF"/><rect x="3" y="3" width="12" height="1" fill="#FFFFFF"/><rect x="15" y="3" width="1" height="1" fill="#000000"/><rect x="0" y="4" width="1" height="1" fill="#000000"/><rect x="1" y="4" width="1" height="1" fill="#FFFFFF"/><rect x="2" y="4" width="1" height="1" fill="#808080"/><rect x="3" y="4" width="1" height="1" fill="#FFFFFF"/><rect x="4" y="4" width="1" height="1" fill="#808080"/><rect x="5" y="4" width="1" height="1" fill="#FFFFFF"/><rect x="6" y="4" width="1" height="1" fill="#808080"/><rect x="7" y="4" width="1" height="1" fill="#FFFFFF"/><rect x="8" y="4" width="1" height="1" fill="#808080"/><rect x="9" y="4" width="1" height="1" fill="#FFFFFF"/><rect x="10" y="4" width="1" height="1" fill="#808080"/><rect x="11" y="4" width="1" height="1" fill="#FFFFFF"/><rect x="12" y="4" width="1" height="1" fill="#808080"/><rect x="13" y="4" width="2" height="1" fill="#FFFFFF"/><rect x="15" y="4" width="1" height="1" fill="#000000"/><rect x="0" y="5" width="1" height="1" fill="#000000"/><rect x="1" y="5" width="14" height="1" fill="#FFFFFF"/><rect x="15" y="5" width="1" height="1" fill="#000000"/><rect x="0" y="6" width="1" height="1" fill="#000000"/><rect x="1" y="6" width="14" height="1" fill="#FFFFFF"/><rect x="15" y="6" width="1" height="1" fill="#000000"/><rect x="0" y="7" width="1" height="1" fill="#000000"/><rect x="1" y="7" width="1" height="1" fill="#FFFFFF"/><rect x="2" y="7" width="1" height="1" fill="#FF0000"/><rect x="3" y="7" width="4" height="1" fill="#FFFFFF"/><rect x="7" y="7" width="1" height="1" fill="#FF0000"/><rect x="8" y="7" width="3" height="1" fill="#FFFFFF"/><rect x="11" y="7" width="1" height="1" fill="#FF0000"/><rect x="12" y="7" width="3" height="1" fill="#FFFFFF"/><rect x="15" y="7" width="1" height="1" fill="#000000"/><rect x="0" y="8" width="1" height="1" fill="#000000"/><rect x="1" y="8" width="3" height="1" fill="#FF0000"/><rect x="4" y="8" width="2" height="1" fill="#FFFFFF"/><rect x="6" y="8" width="3" height="1" fill="#FF0000"/><rect x="9" y="8" width="1" height="1" fill="#FFFFFF"/><rect x="10" y="8" width="3" height="1" fill="#FF0000"/><rect x="13" y="8" width="1" height="1" fill="#FFFFFF"/><rect x="14" y="8" width="1" height="1" fill="#FF0000"/><rect x="15" y="8" width="1" height="1" fill="#000000"/><rect x="0" y="9" width="1" height="1" fill="#000000"/><rect x="1" y="9" width="1" height="1" fill="#FF0000"/><rect x="2" y="9" width="1" height="1" fill="#FFFF00"/><rect x="3" y="9" width="4" height="1" fill="#FF0000"/><rect x="7" y="9" width="1" height="1" fill="#FFFF00"/><rect x="8" y="9" width="3" height="1" fill="#FF0000"/><rect x="11" y="9" width="1" height="1" fill="#FFFF00"/><rect x="12" y="9" width="3" height="1" fill="#FF0000"/><rect x="15" y="9" width="1" height="1" fill="#000000"/><rect x="0" y="10" width="1" height="1" fill="#000000"/><rect x="1" y="10" width="3" height="1" fill="#FFFF00"/><rect x="4" y="10" width="2" height="1" fill="#FF0000"/><rect x="6" y="10" width="3" height="1" fill="#FFFF00"/><rect x="9" y="10" width="1" height="1" fill="#FF0000"/><rect x="10" y="10" width="3" height="1" fill="#FFFF00"/><rect x="13" y="10" width="1" height="1" fill="#FF0000"/><rect x="14" y="10" width="1" height="1" fill="#FFFF00"/><rect x="15" y="10" width="1" height="1" fill="#000000"/><rect x="0" y="11" width="1" height="1" fill="#000000"/><rect x="1" y="11" width="14" height="1" fill="#FFFF00"/><rect x="15" y="11" width="1" height="1" fill="#000000"/><rect x="0" y="12" width="1" height="1" fill="#000000"/><rect x="1" y="12" width="2" height="1" fill="#0000FF"/><rect x="3" y="12" width="2" height="1" fill="#FFFF00"/><rect x="5" y="12" width="2" height="1" fill="#0000FF"/><rect x="7" y="12" width="2" height="1" fill="#FFFF00"/><rect x="9" y="12" width="3" height="1" fill="#0000FF"/><rect x="12" y="12" width="2" height="1" fill="#FFFF00"/><rect x="14" y="12" width="1" height="1" fill="#0000FF"/><rect x="15" y="12" width="1" height="1" fill="#000000"/><rect x="0" y="13" width="1" height="1" fill="#000000"/><rect x="1" y="13" width="14" height="1" fill="#0000FF"/><rect x="15" y="13" width="1" height="1" fill="#000000"/><rect x="0" y="14" width="16" height="1" fill="#000000"/></svg></div>
<div class="tb" style="left:149px;top:105px;width:23px;height:22px"><svg class="a" style="left:2px;top:2px" width="16" height="13" shape-rendering="crispEdges"><rect x="2" y="2" width="2" height="1" fill="#000080"/><rect x="2" y="3" width="1" height="1" fill="#000080"/><rect x="3" y="3" width="1" height="1" fill="#FFFFFF"/><rect x="4" y="3" width="1" height="1" fill="#000080"/><rect x="2" y="4" width="4" height="1" fill="#000080"/><rect x="3" y="5" width="4" height="1" fill="#000080"/><rect x="4" y="6" width="4" height="1" fill="#000080"/><rect x="6" y="7" width="8" height="1" fill="#000080"/><rect x="7" y="8" width="3" height="1" fill="#000080"/><rect x="12" y="8" width="2" height="1" fill="#000080"/><rect x="7" y="9" width="2" height="1" fill="#000080"/><rect x="12" y="9" width="2" height="1" fill="#000080"/><rect x="7" y="10" width="3" height="1" fill="#000080"/><rect x="12" y="10" width="2" height="1" fill="#000080"/><rect x="8" y="11" width="3" height="1" fill="#000080"/><rect x="12" y="11" width="2" height="1" fill="#000080"/><rect x="8" y="12" width="3" height="1" fill="#000080"/></svg></div>
<div class="a" style="left:178px;top:102px;width:1px;height:28px;background:#808080"></div><div class="a" style="left:179px;top:102px;width:1px;height:28px;background:#fff"></div>
<div class="a" style="left:4px;top:130px;width:746px;height:268px;border-top:1px solid #808080;border-left:1px solid #808080;border-right:1px solid #fff;border-bottom:1px solid #fff"></div>
<div class="a" style="left:5px;top:131px;width:744px;height:266px;border-top:1px solid #000;border-left:1px solid #000;border-right:1px solid #D4D0C8;border-bottom:1px solid #D4D0C8"></div>
<div class="a" style="left:6px;top:132px;width:742px;height:264px;border:1px solid #0A246A;background:#C0C0C0"></div>
<svg class="a" style="left:0;top:0" width="754" height="602" shape-rendering="crispEdges"><rect x="85" y="162" width="613" height="1" fill="#000"/><rect x="86" y="162" width="1" height="49" fill="#000"/><rect x="84" y="185" width="2" height="1" fill="#000"/><rect x="107" y="161" width="1" height="49" fill="#000"/><rect x="127" y="161" width="1" height="49" fill="#000"/><rect x="147" y="161" width="1" height="49" fill="#000"/><rect x="168" y="161" width="1" height="49" fill="#000"/><rect x="188" y="161" width="1" height="49" fill="#000"/><rect x="208" y="161" width="1" height="49" fill="#000"/><rect x="229" y="161" width="1" height="49" fill="#000"/><rect x="249" y="161" width="1" height="49" fill="#000"/><rect x="269" y="161" width="1" height="49" fill="#000"/><rect x="290" y="161" width="1" height="49" fill="#000"/><rect x="310" y="161" width="1" height="49" fill="#000"/><rect x="330" y="161" width="1" height="49" fill="#000"/><rect x="351" y="161" width="1" height="49" fill="#000"/><rect x="371" y="161" width="1" height="49" fill="#000"/><rect x="392" y="161" width="1" height="49" fill="#000"/><rect x="412" y="161" width="1" height="49" fill="#000"/><rect x="432" y="161" width="1" height="49" fill="#000"/><rect x="453" y="161" width="1" height="49" fill="#000"/><rect x="473" y="161" width="1" height="49" fill="#000"/><rect x="494" y="161" width="1" height="49" fill="#000"/><rect x="514" y="161" width="1" height="49" fill="#000"/><rect x="534" y="161" width="1" height="49" fill="#000"/><rect x="555" y="161" width="1" height="49" fill="#000"/><rect x="575" y="161" width="1" height="49" fill="#000"/><rect x="595" y="161" width="1" height="49" fill="#000"/><rect x="615" y="161" width="1" height="49" fill="#000"/><rect x="636" y="161" width="1" height="49" fill="#000"/><rect x="656" y="161" width="1" height="49" fill="#000"/><rect x="676" y="161" width="1" height="49" fill="#000"/><rect x="697" y="161" width="1" height="49" fill="#000"/><rect x="88" y="255" width="1" height="114" fill="#000"/><rect x="88" y="368" width="610" height="1" fill="#000"/><rect x="85" y="255" width="6" height="1" fill="#000"/><rect x="85" y="278" width="6" height="1" fill="#000"/><rect x="85" y="300" width="6" height="1" fill="#000"/><rect x="85" y="323" width="6" height="1" fill="#000"/><rect x="85" y="345" width="6" height="1" fill="#000"/><rect x="85" y="368" width="6" height="1" fill="#000"/><rect x="108" y="256" width="1" height="112" fill="#000"/><rect x="108" y="369" width="1" height="1" fill="#000"/><rect x="128" y="256" width="1" height="112" fill="#000"/><rect x="128" y="369" width="1" height="1" fill="#000"/><rect x="149" y="256" width="1" height="112" fill="#000"/><rect x="149" y="369" width="1" height="1" fill="#000"/><rect x="169" y="256" width="1" height="112" fill="#000"/><rect x="169" y="369" width="1" height="1" fill="#000"/><rect x="189" y="256" width="1" height="112" fill="#000"/><rect x="189" y="369" width="1" height="1" fill="#000"/><rect x="210" y="256" width="1" height="112" fill="#000"/><rect x="210" y="369" width="1" height="1" fill="#000"/><rect x="230" y="256" width="1" height="112" fill="#000"/><rect x="230" y="369" width="1" height="1" fill="#000"/><rect x="250" y="256" width="1" height="112" fill="#000"/><rect x="250" y="369" width="1" height="1" fill="#000"/><rect x="271" y="256" width="1" height="112" fill="#000"/><rect x="271" y="369" width="1" height="1" fill="#000"/><rect x="291" y="256" width="1" height="112" fill="#000"/><rect x="291" y="369" width="1" height="1" fill="#000"/><rect x="311" y="256" width="1" height="112" fill="#000"/><rect x="311" y="369" width="1" height="1" fill="#000"/><rect x="331" y="256" width="1" height="112" fill="#000"/><rect x="331" y="369" width="1" height="1" fill="#000"/><rect x="352" y="256" width="1" height="112" fill="#000"/><rect x="352" y="369" width="1" height="1" fill="#000"/><rect x="372" y="256" width="1" height="112" fill="#000"/><rect x="372" y="369" width="1" height="1" fill="#000"/><rect x="392" y="256" width="1" height="112" fill="#000"/><rect x="392" y="369" width="1" height="1" fill="#000"/><rect x="413" y="256" width="1" height="112" fill="#000"/><rect x="413" y="369" width="1" height="1" fill="#000"/><rect x="433" y="256" width="1" height="112" fill="#000"/><rect x="433" y="369" width="1" height="1" fill="#000"/><rect x="453" y="256" width="1" height="112" fill="#000"/><rect x="453" y="369" width="1" height="1" fill="#000"/><rect x="474" y="256" width="1" height="112" fill="#000"/><rect x="474" y="369" width="1" height="1" fill="#000"/><rect x="494" y="256" width="1" height="112" fill="#000"/><rect x="494" y="369" width="1" height="1" fill="#000"/><rect x="514" y="256" width="1" height="112" fill="#000"/><rect x="514" y="369" width="1" height="1" fill="#000"/><rect x="534" y="256" width="1" height="112" fill="#000"/><rect x="534" y="369" width="1" height="1" fill="#000"/><rect x="555" y="256" width="1" height="112" fill="#000"/><rect x="555" y="369" width="1" height="1" fill="#000"/><rect x="575" y="256" width="1" height="112" fill="#000"/><rect x="575" y="369" width="1" height="1" fill="#000"/><rect x="595" y="256" width="1" height="112" fill="#000"/><rect x="595" y="369" width="1" height="1" fill="#000"/><rect x="616" y="256" width="1" height="112" fill="#000"/><rect x="616" y="369" width="1" height="1" fill="#000"/><rect x="636" y="256" width="1" height="112" fill="#000"/><rect x="636" y="369" width="1" height="1" fill="#000"/><rect x="656" y="256" width="1" height="112" fill="#000"/><rect x="656" y="369" width="1" height="1" fill="#000"/><rect x="677" y="256" width="1" height="112" fill="#000"/><rect x="677" y="369" width="1" height="1" fill="#000"/><rect x="697" y="256" width="1" height="112" fill="#000"/><rect x="697" y="369" width="1" height="1" fill="#000"/><rect x="87" y="163" width="3" height="3" fill="#FFFF00"/><rect x="93" y="163" width="3" height="8" fill="#FF0000"/><rect x="93" y="171" width="3" height="14" fill="#FFFF00"/><rect x="106" y="163" width="4" height="3" fill="#FFFF00"/><rect x="110" y="163" width="3" height="3" fill="#FFFF00"/><rect x="113" y="163" width="4" height="2" fill="#FFFF00"/><rect x="117" y="163" width="3" height="8" fill="#FF0000"/><rect x="117" y="171" width="3" height="12" fill="#FFFF00"/><rect x="140" y="163" width="4" height="5" fill="#FFFF00"/><rect x="144" y="163" width="3" height="2" fill="#FFFF00"/><rect x="147" y="163" width="4" height="13" fill="#FF0000"/><rect x="147" y="176" width="4" height="14" fill="#FFFF00"/><rect x="198" y="163" width="4" height="5" fill="#FFFF00"/><rect x="205" y="163" width="3" height="2" fill="#FFFF00"/><rect x="208" y="163" width="4" height="8" fill="#FF0000"/><rect x="208" y="171" width="4" height="7" fill="#FFFF00"/><rect x="222" y="163" width="3" height="2" fill="#FFFF00"/><rect x="225" y="163" width="4" height="2" fill="#FFFF00"/><rect x="235" y="163" width="4" height="6" fill="#FFFF00"/><rect x="239" y="163" width="3" height="5" fill="#FFFF00"/><rect x="242" y="163" width="4" height="2" fill="#FFFF00"/><rect x="263" y="163" width="3" height="5" fill="#FFFF00"/><rect x="266" y="163" width="3" height="8" fill="#FF0000"/><rect x="266" y="171" width="3" height="6" fill="#FFFF00"/><rect x="283" y="163" width="3" height="4" fill="#FF0000"/><rect x="283" y="167" width="3" height="8" fill="#FFFF00"/><rect x="286" y="163" width="4" height="4" fill="#FF0000"/><rect x="286" y="167" width="4" height="1" fill="#FFFF00"/><rect x="320" y="163" width="4" height="5" fill="#FFFF00"/><rect x="327" y="163" width="4" height="5" fill="#FFFF00"/><rect x="331" y="163" width="3" height="8" fill="#FF0000"/><rect x="331" y="171" width="3" height="10" fill="#FFFF00"/><rect x="334" y="163" width="3" height="2" fill="#FFFF00"/><rect x="337" y="163" width="4" height="2" fill="#FFFF00"/><rect x="341" y="163" width="3" height="8" fill="#FF0000"/><rect x="341" y="171" width="3" height="12" fill="#FFFF00"/><rect x="344" y="163" width="4" height="3" fill="#FFFF00"/><rect x="348" y="163" width="3" height="2" fill="#FFFF00"/><rect x="351" y="163" width="3" height="8" fill="#FF0000"/><rect x="351" y="171" width="3" height="9" fill="#FFFF00"/><rect x="354" y="163" width="4" height="4" fill="#FF0000"/><rect x="354" y="167" width="4" height="1" fill="#FFFF00"/><rect x="358" y="163" width="3" height="2" fill="#FFFF00"/><rect x="89" y="367" width="276" height="1" fill="#FF00FF"/><rect x="95" y="362" width="3" height="6" fill="#808000"/><rect x="95" y="360" width="3" height="2" fill="#00FF00"/><rect x="95" y="358" width="3" height="2" fill="#00FFFF"/><rect x="98" y="324" width="3" height="44" fill="#00FFFF"/><rect x="101" y="308" width="4" height="60" fill="#00FFFF"/><rect x="105" y="336" width="3" height="32" fill="#00FFFF"/><rect x="108" y="336" width="3" height="32" fill="#00FFFF"/><rect x="115" y="363" width="3" height="5" fill="#808000"/><rect x="118" y="359" width="4" height="5" fill="#00FFFF"/><rect x="118" y="364" width="4" height="2" fill="#00FF00"/><rect x="118" y="366" width="4" height="2" fill="#808000"/><rect x="122" y="364" width="3" height="4" fill="#00FFFF"/><rect x="125" y="366" width="3" height="2" fill="#00FFFF"/><rect x="128" y="365" width="4" height="3" fill="#FFFFFF"/><rect x="132" y="304" width="3" height="28" fill="#FFFFFF"/><rect x="132" y="332" width="3" height="36" fill="#00FFFF"/><rect x="139" y="345" width="3" height="23" fill="#00FFFF"/><rect x="149" y="306" width="3" height="52" fill="#FFFFFF"/><rect x="149" y="358" width="3" height="2" fill="#00FFFF"/><rect x="149" y="360" width="3" height="2" fill="#00FF00"/><rect x="149" y="362" width="3" height="6" fill="#808000"/><rect x="152" y="305" width="3" height="59" fill="#FFFFFF"/><rect x="152" y="364" width="3" height="4" fill="#00FFFF"/><rect x="155" y="346" width="4" height="22" fill="#00FFFF"/><rect x="159" y="359" width="3" height="9" fill="#00FFFF"/><rect x="162" y="366" width="4" height="2" fill="#00FFFF"/><rect x="166" y="351" width="3" height="17" fill="#00FFFF"/><rect x="169" y="357" width="3" height="11" fill="#00FFFF"/><rect x="172" y="362" width="4" height="6" fill="#00FFFF"/><rect x="176" y="367" width="3" height="1" fill="#00FFFF"/><rect x="179" y="355" width="4" height="13" fill="#00FFFF"/><rect x="183" y="345" width="3" height="23" fill="#00FFFF"/><rect x="186" y="277" width="3" height="91" fill="#00FFFF"/><rect x="189" y="328" width="4" height="40" fill="#00FFFF"/><rect x="193" y="313" width="3" height="55" fill="#00FFFF"/><rect x="196" y="353" width="3" height="15" fill="#00FFFF"/><rect x="199" y="342" width="4" height="26" fill="#00FFFF"/><rect x="206" y="363" width="4" height="5" fill="#808000"/><rect x="210" y="357" width="3" height="8" fill="#00FFFF"/><rect x="210" y="365" width="3" height="1" fill="#00FF00"/><rect x="210" y="366" width="3" height="2" fill="#808000"/><rect x="213" y="329" width="3" height="39" fill="#00FFFF"/><rect x="216" y="332" width="4" height="36" fill="#00FFFF"/><rect x="220" y="359" width="3" height="9" fill="#00FFFF"/><rect x="223" y="303" width="4" height="54" fill="#FFFFFF"/><rect x="223" y="357" width="4" height="11" fill="#00FFFF"/><rect x="227" y="318" width="3" height="50" fill="#00FFFF"/><rect x="230" y="365" width="3" height="3" fill="#00FFFF"/><rect x="233" y="345" width="4" height="23" fill="#00FFFF"/><rect x="237" y="296" width="3" height="72" fill="#00FFFF"/><rect x="240" y="281" width="3" height="87" fill="#00FFFF"/><rect x="243" y="298" width="4" height="70" fill="#00FFFF"/><rect x="247" y="318" width="3" height="50" fill="#00FFFF"/><rect x="250" y="350" width="4" height="18" fill="#00FFFF"/><rect x="254" y="366" width="3" height="2" fill="#00FFFF"/><rect x="257" y="354" width="3" height="14" fill="#00FFFF"/><rect x="260" y="360" width="4" height="7" fill="#00FFFF"/><rect x="264" y="361" width="3" height="7" fill="#808000"/><rect x="267" y="360" width="3" height="6" fill="#00FFFF"/><rect x="267" y="366" width="3" height="2" fill="#00FF00"/><rect x="270" y="364" width="4" height="4" fill="#00FFFF"/><rect x="274" y="367" width="3" height="1" fill="#00FFFF"/><rect x="277" y="290" width="4" height="78" fill="#FFFFFF"/><rect x="281" y="366" width="3" height="1" fill="#FFFFFF"/><rect x="284" y="361" width="3" height="7" fill="#808000"/><rect x="287" y="325" width="4" height="41" fill="#00FFFF"/><rect x="287" y="366" width="4" height="2" fill="#00FF00"/><rect x="291" y="306" width="3" height="62" fill="#00FFFF"/><rect x="294" y="307" width="4" height="61" fill="#00FFFF"/><rect x="298" y="276" width="3" height="92" fill="#00FFFF"/><rect x="301" y="323" width="3" height="45" fill="#00FFFF"/><rect x="304" y="313" width="4" height="55" fill="#00FFFF"/><rect x="308" y="360" width="3" height="8" fill="#00FFFF"/><rect x="311" y="264" width="3" height="104" fill="#00FFFF"/><rect x="314" y="332" width="4" height="36" fill="#00FFFF"/><rect x="318" y="366" width="3" height="1" fill="#00FFFF"/><rect x="321" y="366" width="4" height="1" fill="#00FFFF"/><rect x="328" y="363" width="3" height="5" fill="#808000"/><rect x="331" y="361" width="4" height="1" fill="#FF8000"/><rect x="331" y="362" width="4" height="2" fill="#00FFFF"/><rect x="331" y="364" width="4" height="1" fill="#00FF00"/><rect x="331" y="365" width="4" height="3" fill="#808000"/><rect x="338" y="363" width="4" height="5" fill="#808000"/><rect x="342" y="361" width="3" height="1" fill="#FFFFFF"/><rect x="342" y="362" width="3" height="2" fill="#00FFFF"/><rect x="342" y="364" width="3" height="1" fill="#00FF00"/><rect x="342" y="365" width="3" height="3" fill="#808000"/><rect x="348" y="365" width="4" height="3" fill="#808000"/><rect x="352" y="359" width="3" height="3" fill="#00FFFF"/><rect x="352" y="362" width="3" height="1" fill="#00FF00"/><rect x="352" y="363" width="3" height="5" fill="#808000"/><rect x="355" y="365" width="3" height="2" fill="#FFFFFF"/><rect x="358" y="365" width="4" height="2" fill="#FFFFFF"/><rect x="362" y="365" width="3" height="2" fill="#FFFFFF"/><rect x="365" y="366" width="4" height="2" fill="#00FFFF"/><path d="M365.5 369.5 L362.5 375.5 L368.5 375.5 Z" fill="#fff" stroke="#000" stroke-width="1"/></svg>
<div class="t" style="left:326px;top:138px;font-size:12px;line-height:14px;letter-spacing:0.35px">Health</div>
<div class="t" style="left:294px;top:228px;font-size:12px;line-height:14px;letter-spacing:0.1px">Trend (% Utilization)</div>
<svg class="a" style="left:0;top:0" width="754" height="602" shape-rendering="crispEdges"><rect x="59" y="159" width="2" height="1" fill="#000"/><rect x="58" y="160" width="1" height="1" fill="#000"/><rect x="60" y="160" width="1" height="1" fill="#000"/><rect x="60" y="161" width="1" height="1" fill="#000"/><rect x="60" y="162" width="1" height="1" fill="#000"/><rect x="60" y="163" width="1" height="1" fill="#000"/><rect x="60" y="164" width="1" height="1" fill="#000"/><rect x="60" y="165" width="1" height="1" fill="#000"/><rect x="58" y="166" width="5" height="1" fill="#000"/><rect x="66" y="159" width="3" height="1" fill="#000"/><rect x="65" y="160" width="1" height="1" fill="#000"/><rect x="69" y="160" width="1" height="1" fill="#000"/><rect x="65" y="161" width="1" height="1" fill="#000"/><rect x="69" y="161" width="1" height="1" fill="#000"/><rect x="65" y="162" width="1" height="1" fill="#000"/><rect x="69" y="162" width="1" height="1" fill="#000"/><rect x="65" y="163" width="1" height="1" fill="#000"/><rect x="69" y="163" width="1" height="1" fill="#000"/><rect x="65" y="164" width="1" height="1" fill="#000"/><rect x="69" y="164" width="1" height="1" fill="#000"/><rect x="65" y="165" width="1" height="1" fill="#000"/><rect x="69" y="165" width="1" height="1" fill="#000"/><rect x="66" y="166" width="3" height="1" fill="#000"/><rect x="73" y="159" width="3" height="1" fill="#000"/><rect x="72" y="160" width="1" height="1" fill="#000"/><rect x="76" y="160" width="1" height="1" fill="#000"/><rect x="72" y="161" width="1" height="1" fill="#000"/><rect x="76" y="161" width="1" height="1" fill="#000"/><rect x="72" y="162" width="1" height="1" fill="#000"/><rect x="76" y="162" width="1" height="1" fill="#000"/><rect x="72" y="163" width="1" height="1" fill="#000"/><rect x="76" y="163" width="1" height="1" fill="#000"/><rect x="72" y="164" width="1" height="1" fill="#000"/><rect x="76" y="164" width="1" height="1" fill="#000"/><rect x="72" y="165" width="1" height="1" fill="#000"/><rect x="76" y="165" width="1" height="1" fill="#000"/><rect x="73" y="166" width="3" height="1" fill="#000"/><rect x="80" y="159" width="1" height="1" fill="#000"/><rect x="79" y="160" width="1" height="1" fill="#000"/><rect x="81" y="160" width="1" height="1" fill="#000"/><rect x="80" y="161" width="1" height="1" fill="#000"/><rect x="79" y="162" width="5" height="1" fill="#000"/><rect x="82" y="164" width="1" height="1" fill="#000"/><rect x="81" y="165" width="1" height="1" fill="#000"/><rect x="83" y="165" width="1" height="1" fill="#000"/><rect x="82" y="166" width="1" height="1" fill="#000"/><rect x="65" y="182" width="5" height="1" fill="#000"/><rect x="65" y="183" width="1" height="1" fill="#000"/><rect x="65" y="184" width="1" height="1" fill="#000"/><rect x="65" y="185" width="4" height="1" fill="#000"/><rect x="69" y="186" width="1" height="1" fill="#000"/><rect x="69" y="187" width="1" height="1" fill="#000"/><rect x="65" y="188" width="1" height="1" fill="#000"/><rect x="69" y="188" width="1" height="1" fill="#000"/><rect x="66" y="189" width="3" height="1" fill="#000"/><rect x="73" y="182" width="3" height="1" fill="#000"/><rect x="72" y="183" width="1" height="1" fill="#000"/><rect x="76" y="183" width="1" height="1" fill="#000"/><rect x="72" y="184" width="1" height="1" fill="#000"/><rect x="76" y="184" width="1" height="1" fill="#000"/><rect x="72" y="185" width="1" height="1" fill="#000"/><rect x="76" y="185" width="1" height="1" fill="#000"/><rect x="72" y="186" width="1" height="1" fill="#000"/><rect x="76" y="186" width="1" height="1" fill="#000"/><rect x="72" y="187" width="1" height="1" fill="#000"/><rect x="76" y="187" width="1" height="1" fill="#000"/><rect x="72" y="188" width="1" height="1" fill="#000"/><rect x="76" y="188" width="1" height="1" fill="#000"/><rect x="73" y="189" width="3" height="1" fill="#000"/><rect x="80" y="182" width="1" height="1" fill="#000"/><rect x="79" y="183" width="1" height="1" fill="#000"/><rect x="81" y="183" width="1" height="1" fill="#000"/><rect x="80" y="184" width="1" height="1" fill="#000"/><rect x="79" y="185" width="5" height="1" fill="#000"/><rect x="82" y="187" width="1" height="1" fill="#000"/><rect x="81" y="188" width="1" height="1" fill="#000"/><rect x="83" y="188" width="1" height="1" fill="#000"/><rect x="82" y="189" width="1" height="1" fill="#000"/><rect x="73" y="206" width="3" height="1" fill="#000"/><rect x="72" y="207" width="1" height="1" fill="#000"/><rect x="76" y="207" width="1" height="1" fill="#000"/><rect x="72" y="208" width="1" height="1" fill="#000"/><rect x="76" y="208" width="1" height="1" fill="#000"/><rect x="72" y="209" width="1" height="1" fill="#000"/><rect x="76" y="209" width="1" height="1" fill="#000"/><rect x="72" y="210" width="1" height="1" fill="#000"/><rect x="76" y="210" width="1" height="1" fill="#000"/><rect x="72" y="211" width="1" height="1" fill="#000"/><rect x="76" y="211" width="1" height="1" fill="#000"/><rect x="72" y="212" width="1" height="1" fill="#000"/><rect x="76" y="212" width="1" height="1" fill="#000"/><rect x="73" y="213" width="3" height="1" fill="#000"/><rect x="80" y="206" width="1" height="1" fill="#000"/><rect x="79" y="207" width="1" height="1" fill="#000"/><rect x="81" y="207" width="1" height="1" fill="#000"/><rect x="80" y="208" width="1" height="1" fill="#000"/><rect x="79" y="209" width="5" height="1" fill="#000"/><rect x="82" y="211" width="1" height="1" fill="#000"/><rect x="81" y="212" width="1" height="1" fill="#000"/><rect x="83" y="212" width="1" height="1" fill="#000"/><rect x="82" y="213" width="1" height="1" fill="#000"/><rect x="52" y="252" width="2" height="1" fill="#000"/><rect x="51" y="253" width="1" height="1" fill="#000"/><rect x="53" y="253" width="1" height="1" fill="#000"/><rect x="53" y="254" width="1" height="1" fill="#000"/><rect x="53" y="255" width="1" height="1" fill="#000"/><rect x="53" y="256" width="1" height="1" fill="#000"/><rect x="53" y="257" width="1" height="1" fill="#000"/><rect x="53" y="258" width="1" height="1" fill="#000"/><rect x="51" y="259" width="5" height="1" fill="#000"/><rect x="59" y="258" width="2" height="1" fill="#000"/><rect x="59" y="259" width="2" height="1" fill="#000"/><rect x="66" y="252" width="3" height="1" fill="#000"/><rect x="65" y="253" width="1" height="1" fill="#000"/><rect x="69" y="253" width="1" height="1" fill="#000"/><rect x="65" y="254" width="1" height="1" fill="#000"/><rect x="69" y="254" width="1" height="1" fill="#000"/><rect x="65" y="255" width="1" height="1" fill="#000"/><rect x="69" y="255" width="1" height="1" fill="#000"/><rect x="65" y="256" width="1" height="1" fill="#000"/><rect x="69" y="256" width="1" height="1" fill="#000"/><rect x="65" y="257" width="1" height="1" fill="#000"/><rect x="69" y="257" width="1" height="1" fill="#000"/><rect x="65" y="258" width="1" height="1" fill="#000"/><rect x="69" y="258" width="1" height="1" fill="#000"/><rect x="66" y="259" width="3" height="1" fill="#000"/><rect x="73" y="252" width="3" height="1" fill="#000"/><rect x="72" y="253" width="1" height="1" fill="#000"/><rect x="76" y="253" width="1" height="1" fill="#000"/><rect x="72" y="254" width="1" height="1" fill="#000"/><rect x="76" y="254" width="1" height="1" fill="#000"/><rect x="72" y="255" width="1" height="1" fill="#000"/><rect x="76" y="255" width="1" height="1" fill="#000"/><rect x="72" y="256" width="1" height="1" fill="#000"/><rect x="76" y="256" width="1" height="1" fill="#000"/><rect x="72" y="257" width="1" height="1" fill="#000"/><rect x="76" y="257" width="1" height="1" fill="#000"/><rect x="72" y="258" width="1" height="1" fill="#000"/><rect x="76" y="258" width="1" height="1" fill="#000"/><rect x="73" y="259" width="3" height="1" fill="#000"/><rect x="80" y="252" width="1" height="1" fill="#000"/><rect x="79" y="253" width="1" height="1" fill="#000"/><rect x="81" y="253" width="1" height="1" fill="#000"/><rect x="80" y="254" width="1" height="1" fill="#000"/><rect x="79" y="255" width="5" height="1" fill="#000"/><rect x="82" y="257" width="1" height="1" fill="#000"/><rect x="81" y="258" width="1" height="1" fill="#000"/><rect x="83" y="258" width="1" height="1" fill="#000"/><rect x="82" y="259" width="1" height="1" fill="#000"/><rect x="52" y="274" width="3" height="1" fill="#000"/><rect x="51" y="275" width="1" height="1" fill="#000"/><rect x="55" y="275" width="1" height="1" fill="#000"/><rect x="51" y="276" width="1" height="1" fill="#000"/><rect x="55" y="276" width="1" height="1" fill="#000"/><rect x="51" y="277" width="1" height="1" fill="#000"/><rect x="55" y="277" width="1" height="1" fill="#000"/><rect x="51" y="278" width="1" height="1" fill="#000"/><rect x="55" y="278" width="1" height="1" fill="#000"/><rect x="51" y="279" width="1" height="1" fill="#000"/><rect x="55" y="279" width="1" height="1" fill="#000"/><rect x="51" y="280" width="1" height="1" fill="#000"/><rect x="55" y="280" width="1" height="1" fill="#000"/><rect x="52" y="281" width="3" height="1" fill="#000"/><rect x="59" y="280" width="2" height="1" fill="#000"/><rect x="59" y="281" width="2" height="1" fill="#000"/><rect x="66" y="274" width="3" height="1" fill="#000"/><rect x="65" y="275" width="1" height="1" fill="#000"/><rect x="69" y="275" width="1" height="1" fill="#000"/><rect x="65" y="276" width="1" height="1" fill="#000"/><rect x="69" y="276" width="1" height="1" fill="#000"/><rect x="66" y="277" width="3" height="1" fill="#000"/><rect x="65" y="278" width="1" height="1" fill="#000"/><rect x="69" y="278" width="1" height="1" fill="#000"/><rect x="65" y="279" width="1" height="1" fill="#000"/><rect x="69" y="279" width="1" height="1" fill="#000"/><rect x="65" y="280" width="1" height="1" fill="#000"/><rect x="69" y="280" width="1" height="1" fill="#000"/><rect x="66" y="281" width="3" height="1" fill="#000"/><rect x="73" y="274" width="3" height="1" fill="#000"/><rect x="72" y="275" width="1" height="1" fill="#000"/><rect x="76" y="275" width="1" height="1" fill="#000"/><rect x="72" y="276" width="1" height="1" fill="#000"/><rect x="76" y="276" width="1" height="1" fill="#000"/><rect x="72" y="277" width="1" height="1" fill="#000"/><rect x="76" y="277" width="1" height="1" fill="#000"/><rect x="72" y="278" width="1" height="1" fill="#000"/><rect x="76" y="278" width="1" height="1" fill="#000"/><rect x="72" y="279" width="1" height="1" fill="#000"/><rect x="76" y="279" width="1" height="1" fill="#000"/><rect x="72" y="280" width="1" height="1" fill="#000"/><rect x="76" y="280" width="1" height="1" fill="#000"/><rect x="73" y="281" width="3" height="1" fill="#000"/><rect x="80" y="274" width="1" height="1" fill="#000"/><rect x="79" y="275" width="1" height="1" fill="#000"/><rect x="81" y="275" width="1" height="1" fill="#000"/><rect x="80" y="276" width="1" height="1" fill="#000"/><rect x="79" y="277" width="5" height="1" fill="#000"/><rect x="82" y="279" width="1" height="1" fill="#000"/><rect x="81" y="280" width="1" height="1" fill="#000"/><rect x="83" y="280" width="1" height="1" fill="#000"/><rect x="82" y="281" width="1" height="1" fill="#000"/><rect x="52" y="296" width="3" height="1" fill="#000"/><rect x="51" y="297" width="1" height="1" fill="#000"/><rect x="55" y="297" width="1" height="1" fill="#000"/><rect x="51" y="298" width="1" height="1" fill="#000"/><rect x="55" y="298" width="1" height="1" fill="#000"/><rect x="51" y="299" width="1" height="1" fill="#000"/><rect x="55" y="299" width="1" height="1" fill="#000"/><rect x="51" y="300" width="1" height="1" fill="#000"/><rect x="55" y="300" width="1" height="1" fill="#000"/><rect x="51" y="301" width="1" height="1" fill="#000"/><rect x="55" y="301" width="1" height="1" fill="#000"/><rect x="51" y="302" width="1" height="1" fill="#000"/><rect x="55" y="302" width="1" height="1" fill="#000"/><rect x="52" y="303" width="3" height="1" fill="#000"/><rect x="59" y="302" width="2" height="1" fill="#000"/><rect x="59" y="303" width="2" height="1" fill="#000"/><rect x="67" y="296" width="3" height="1" fill="#000"/><rect x="66" y="297" width="1" height="1" fill="#000"/><rect x="65" y="298" width="1" height="1" fill="#000"/><rect x="65" y="299" width="4" height="1" fill="#000"/><rect x="65" y="300" width="1" height="1" fill="#000"/><rect x="69" y="300" width="1" height="1" fill="#000"/><rect x="65" y="301" width="1" height="1" fill="#000"/><rect x="69" y="301" width="1" height="1" fill="#000"/><rect x="65" y="302" width="1" height="1" fill="#000"/><rect x="69" y="302" width="1" height="1" fill="#000"/><rect x="66" y="303" width="3" height="1" fill="#000"/><rect x="73" y="296" width="3" height="1" fill="#000"/><rect x="72" y="297" width="1" height="1" fill="#000"/><rect x="76" y="297" width="1" height="1" fill="#000"/><rect x="72" y="298" width="1" height="1" fill="#000"/><rect x="76" y="298" width="1" height="1" fill="#000"/><rect x="72" y="299" width="1" height="1" fill="#000"/><rect x="76" y="299" width="1" height="1" fill="#000"/><rect x="72" y="300" width="1" height="1" fill="#000"/><rect x="76" y="300" width="1" height="1" fill="#000"/><rect x="72" y="301" width="1" height="1" fill="#000"/><rect x="76" y="301" width="1" height="1" fill="#000"/><rect x="72" y="302" width="1" height="1" fill="#000"/><rect x="76" y="302" width="1" height="1" fill="#000"/><rect x="73" y="303" width="3" height="1" fill="#000"/><rect x="80" y="296" width="1" height="1" fill="#000"/><rect x="79" y="297" width="1" height="1" fill="#000"/><rect x="81" y="297" width="1" height="1" fill="#000"/><rect x="80" y="298" width="1" height="1" fill="#000"/><rect x="79" y="299" width="5" height="1" fill="#000"/><rect x="82" y="301" width="1" height="1" fill="#000"/><rect x="81" y="302" width="1" height="1" fill="#000"/><rect x="83" y="302" width="1" height="1" fill="#000"/><rect x="82" y="303" width="1" height="1" fill="#000"/><rect x="52" y="319" width="3" height="1" fill="#000"/><rect x="51" y="320" width="1" height="1" fill="#000"/><rect x="55" y="320" width="1" height="1" fill="#000"/><rect x="51" y="321" width="1" height="1" fill="#000"/><rect x="55" y="321" width="1" height="1" fill="#000"/><rect x="51" y="322" width="1" height="1" fill="#000"/><rect x="55" y="322" width="1" height="1" fill="#000"/><rect x="51" y="323" width="1" height="1" fill="#000"/><rect x="55" y="323" width="1" height="1" fill="#000"/><rect x="51" y="324" width="1" height="1" fill="#000"/><rect x="55" y="324" width="1" height="1" fill="#000"/><rect x="51" y="325" width="1" height="1" fill="#000"/><rect x="55" y="325" width="1" height="1" fill="#000"/><rect x="52" y="326" width="3" height="1" fill="#000"/><rect x="59" y="325" width="2" height="1" fill="#000"/><rect x="59" y="326" width="2" height="1" fill="#000"/><rect x="68" y="319" width="1" height="1" fill="#000"/><rect x="67" y="320" width="2" height="1" fill="#000"/><rect x="66" y="321" width="1" height="1" fill="#000"/><rect x="68" y="321" width="1" height="1" fill="#000"/><rect x="65" y="322" width="1" height="1" fill="#000"/><rect x="68" y="322" width="1" height="1" fill="#000"/><rect x="65" y="323" width="1" height="1" fill="#000"/><rect x="68" y="323" width="1" height="1" fill="#000"/><rect x="65" y="324" width="5" height="1" fill="#000"/><rect x="68" y="325" width="1" height="1" fill="#000"/><rect x="67" y="326" width="3" height="1" fill="#000"/><rect x="73" y="319" width="3" height="1" fill="#000"/><rect x="72" y="320" width="1" height="1" fill="#000"/><rect x="76" y="320" width="1" height="1" fill="#000"/><rect x="72" y="321" width="1" height="1" fill="#000"/><rect x="76" y="321" width="1" height="1" fill="#000"/><rect x="72" y="322" width="1" height="1" fill="#000"/><rect x="76" y="322" width="1" height="1" fill="#000"/><rect x="72" y="323" width="1" height="1" fill="#000"/><rect x="76" y="323" width="1" height="1" fill="#000"/><rect x="72" y="324" width="1" height="1" fill="#000"/><rect x="76" y="324" width="1" height="1" fill="#000"/><rect x="72" y="325" width="1" height="1" fill="#000"/><rect x="76" y="325" width="1" height="1" fill="#000"/><rect x="73" y="326" width="3" height="1" fill="#000"/><rect x="80" y="319" width="1" height="1" fill="#000"/><rect x="79" y="320" width="1" height="1" fill="#000"/><rect x="81" y="320" width="1" height="1" fill="#000"/><rect x="80" y="321" width="1" height="1" fill="#000"/><rect x="79" y="322" width="5" height="1" fill="#000"/><rect x="82" y="324" width="1" height="1" fill="#000"/><rect x="81" y="325" width="1" height="1" fill="#000"/><rect x="83" y="325" width="1" height="1" fill="#000"/><rect x="82" y="326" width="1" height="1" fill="#000"/><rect x="52" y="342" width="3" height="1" fill="#000"/><rect x="51" y="343" width="1" height="1" fill="#000"/><rect x="55" y="343" width="1" height="1" fill="#000"/><rect x="51" y="344" width="1" height="1" fill="#000"/><rect x="55" y="344" width="1" height="1" fill="#000"/><rect x="51" y="345" width="1" height="1" fill="#000"/><rect x="55" y="345" width="1" height="1" fill="#000"/><rect x="51" y="346" width="1" height="1" fill="#000"/><rect x="55" y="346" width="1" height="1" fill="#000"/><rect x="51" y="347" width="1" height="1" fill="#000"/><rect x="55" y="347" width="1" height="1" fill="#000"/><rect x="51" y="348" width="1" height="1" fill="#000"/><rect x="55" y="348" width="1" height="1" fill="#000"/><rect x="52" y="349" width="3" height="1" fill="#000"/><rect x="59" y="348" width="2" height="1" fill="#000"/><rect x="59" y="349" width="2" height="1" fill="#000"/><rect x="66" y="342" width="3" height="1" fill="#000"/><rect x="65" y="343" width="1" height="1" fill="#000"/><rect x="69" y="343" width="1" height="1" fill="#000"/><rect x="69" y="344" width="1" height="1" fill="#000"/><rect x="68" y="345" width="1" height="1" fill="#000"/><rect x="67" y="346" width="1" height="1" fill="#000"/><rect x="66" y="347" width="1" height="1" fill="#000"/><rect x="65" y="348" width="1" height="1" fill="#000"/><rect x="65" y="349" width="5" height="1" fill="#000"/><rect x="73" y="342" width="3" height="1" fill="#000"/><rect x="72" y="343" width="1" height="1" fill="#000"/><rect x="76" y="343" width="1" height="1" fill="#000"/><rect x="72" y="344" width="1" height="1" fill="#000"/><rect x="76" y="344" width="1" height="1" fill="#000"/><rect x="72" y="345" width="1" height="1" fill="#000"/><rect x="76" y="345" width="1" height="1" fill="#000"/><rect x="72" y="346" width="1" height="1" fill="#000"/><rect x="76" y="346" width="1" height="1" fill="#000"/><rect x="72" y="347" width="1" height="1" fill="#000"/><rect x="76" y="347" width="1" height="1" fill="#000"/><rect x="72" y="348" width="1" height="1" fill="#000"/><rect x="76" y="348" width="1" height="1" fill="#000"/><rect x="73" y="349" width="3" height="1" fill="#000"/><rect x="80" y="342" width="1" height="1" fill="#000"/><rect x="79" y="343" width="1" height="1" fill="#000"/><rect x="81" y="343" width="1" height="1" fill="#000"/><rect x="80" y="344" width="1" height="1" fill="#000"/><rect x="79" y="345" width="5" height="1" fill="#000"/><rect x="82" y="347" width="1" height="1" fill="#000"/><rect x="81" y="348" width="1" height="1" fill="#000"/><rect x="83" y="348" width="1" height="1" fill="#000"/><rect x="82" y="349" width="1" height="1" fill="#000"/><rect x="52" y="364" width="3" height="1" fill="#000"/><rect x="51" y="365" width="1" height="1" fill="#000"/><rect x="55" y="365" width="1" height="1" fill="#000"/><rect x="51" y="366" width="1" height="1" fill="#000"/><rect x="55" y="366" width="1" height="1" fill="#000"/><rect x="51" y="367" width="1" height="1" fill="#000"/><rect x="55" y="367" width="1" height="1" fill="#000"/><rect x="51" y="368" width="1" height="1" fill="#000"/><rect x="55" y="368" width="1" height="1" fill="#000"/><rect x="51" y="369" width="1" height="1" fill="#000"/><rect x="55" y="369" width="1" height="1" fill="#000"/><rect x="51" y="370" width="1" height="1" fill="#000"/><rect x="55" y="370" width="1" height="1" fill="#000"/><rect x="52" y="371" width="3" height="1" fill="#000"/><rect x="59" y="370" width="2" height="1" fill="#000"/><rect x="59" y="371" width="2" height="1" fill="#000"/><rect x="66" y="364" width="3" height="1" fill="#000"/><rect x="65" y="365" width="1" height="1" fill="#000"/><rect x="69" y="365" width="1" height="1" fill="#000"/><rect x="65" y="366" width="1" height="1" fill="#000"/><rect x="69" y="366" width="1" height="1" fill="#000"/><rect x="65" y="367" width="1" height="1" fill="#000"/><rect x="69" y="367" width="1" height="1" fill="#000"/><rect x="65" y="368" width="1" height="1" fill="#000"/><rect x="69" y="368" width="1" height="1" fill="#000"/><rect x="65" y="369" width="1" height="1" fill="#000"/><rect x="69" y="369" width="1" height="1" fill="#000"/><rect x="65" y="370" width="1" height="1" fill="#000"/><rect x="69" y="370" width="1" height="1" fill="#000"/><rect x="66" y="371" width="3" height="1" fill="#000"/><rect x="73" y="364" width="3" height="1" fill="#000"/><rect x="72" y="365" width="1" height="1" fill="#000"/><rect x="76" y="365" width="1" height="1" fill="#000"/><rect x="72" y="366" width="1" height="1" fill="#000"/><rect x="76" y="366" width="1" height="1" fill="#000"/><rect x="72" y="367" width="1" height="1" fill="#000"/><rect x="76" y="367" width="1" height="1" fill="#000"/><rect x="72" y="368" width="1" height="1" fill="#000"/><rect x="76" y="368" width="1" height="1" fill="#000"/><rect x="72" y="369" width="1" height="1" fill="#000"/><rect x="76" y="369" width="1" height="1" fill="#000"/><rect x="72" y="370" width="1" height="1" fill="#000"/><rect x="76" y="370" width="1" height="1" fill="#000"/><rect x="73" y="371" width="3" height="1" fill="#000"/><rect x="80" y="364" width="1" height="1" fill="#000"/><rect x="79" y="365" width="1" height="1" fill="#000"/><rect x="81" y="365" width="1" height="1" fill="#000"/><rect x="80" y="366" width="1" height="1" fill="#000"/><rect x="79" y="367" width="5" height="1" fill="#000"/><rect x="82" y="369" width="1" height="1" fill="#000"/><rect x="81" y="370" width="1" height="1" fill="#000"/><rect x="83" y="370" width="1" height="1" fill="#000"/><rect x="82" y="371" width="1" height="1" fill="#000"/><rect x="74" y="375" width="2" height="1" fill="#000"/><rect x="73" y="376" width="1" height="1" fill="#000"/><rect x="75" y="376" width="1" height="1" fill="#000"/><rect x="75" y="377" width="1" height="1" fill="#000"/><rect x="75" y="378" width="1" height="1" fill="#000"/><rect x="75" y="379" width="1" height="1" fill="#000"/><rect x="75" y="380" width="1" height="1" fill="#000"/><rect x="75" y="381" width="1" height="1" fill="#000"/><rect x="73" y="382" width="5" height="1" fill="#000"/><rect x="80" y="375" width="5" height="1" fill="#000"/><rect x="80" y="376" width="1" height="1" fill="#000"/><rect x="84" y="376" width="1" height="1" fill="#000"/><rect x="84" y="377" width="1" height="1" fill="#000"/><rect x="83" y="378" width="1" height="1" fill="#000"/><rect x="83" y="379" width="1" height="1" fill="#000"/><rect x="82" y="380" width="1" height="1" fill="#000"/><rect x="82" y="381" width="1" height="1" fill="#000"/><rect x="82" y="382" width="1" height="1" fill="#000"/><rect x="88" y="377" width="2" height="1" fill="#000"/><rect x="88" y="378" width="2" height="1" fill="#000"/><rect x="88" y="381" width="2" height="1" fill="#000"/><rect x="88" y="382" width="2" height="1" fill="#000"/><rect x="95" y="375" width="3" height="1" fill="#000"/><rect x="94" y="376" width="1" height="1" fill="#000"/><rect x="98" y="376" width="1" height="1" fill="#000"/><rect x="94" y="377" width="1" height="1" fill="#000"/><rect x="98" y="377" width="1" height="1" fill="#000"/><rect x="94" y="378" width="1" height="1" fill="#000"/><rect x="98" y="378" width="1" height="1" fill="#000"/><rect x="94" y="379" width="1" height="1" fill="#000"/><rect x="98" y="379" width="1" height="1" fill="#000"/><rect x="94" y="380" width="1" height="1" fill="#000"/><rect x="98" y="380" width="1" height="1" fill="#000"/><rect x="94" y="381" width="1" height="1" fill="#000"/><rect x="98" y="381" width="1" height="1" fill="#000"/><rect x="95" y="382" width="3" height="1" fill="#000"/><rect x="102" y="375" width="3" height="1" fill="#000"/><rect x="101" y="376" width="1" height="1" fill="#000"/><rect x="105" y="376" width="1" height="1" fill="#000"/><rect x="101" y="377" width="1" height="1" fill="#000"/><rect x="105" y="377" width="1" height="1" fill="#000"/><rect x="101" y="378" width="1" height="1" fill="#000"/><rect x="105" y="378" width="1" height="1" fill="#000"/><rect x="101" y="379" width="1" height="1" fill="#000"/><rect x="105" y="379" width="1" height="1" fill="#000"/><rect x="101" y="380" width="1" height="1" fill="#000"/><rect x="105" y="380" width="1" height="1" fill="#000"/><rect x="101" y="381" width="1" height="1" fill="#000"/><rect x="105" y="381" width="1" height="1" fill="#000"/><rect x="102" y="382" width="3" height="1" fill="#000"/><rect x="114" y="375" width="2" height="1" fill="#000"/><rect x="113" y="376" width="1" height="1" fill="#000"/><rect x="115" y="376" width="1" height="1" fill="#000"/><rect x="115" y="377" width="1" height="1" fill="#000"/><rect x="115" y="378" width="1" height="1" fill="#000"/><rect x="115" y="379" width="1" height="1" fill="#000"/><rect x="115" y="380" width="1" height="1" fill="#000"/><rect x="115" y="381" width="1" height="1" fill="#000"/><rect x="113" y="382" width="5" height="1" fill="#000"/><rect x="120" y="375" width="5" height="1" fill="#000"/><rect x="120" y="376" width="1" height="1" fill="#000"/><rect x="124" y="376" width="1" height="1" fill="#000"/><rect x="124" y="377" width="1" height="1" fill="#000"/><rect x="123" y="378" width="1" height="1" fill="#000"/><rect x="123" y="379" width="1" height="1" fill="#000"/><rect x="122" y="380" width="1" height="1" fill="#000"/><rect x="122" y="381" width="1" height="1" fill="#000"/><rect x="122" y="382" width="1" height="1" fill="#000"/><rect x="128" y="377" width="2" height="1" fill="#000"/><rect x="128" y="378" width="2" height="1" fill="#000"/><rect x="128" y="381" width="2" height="1" fill="#000"/><rect x="128" y="382" width="2" height="1" fill="#000"/><rect x="135" y="375" width="3" height="1" fill="#000"/><rect x="134" y="376" width="1" height="1" fill="#000"/><rect x="138" y="376" width="1" height="1" fill="#000"/><rect x="134" y="377" width="1" height="1" fill="#000"/><rect x="138" y="377" width="1" height="1" fill="#000"/><rect x="134" y="378" width="1" height="1" fill="#000"/><rect x="138" y="378" width="1" height="1" fill="#000"/><rect x="134" y="379" width="1" height="1" fill="#000"/><rect x="138" y="379" width="1" height="1" fill="#000"/><rect x="134" y="380" width="1" height="1" fill="#000"/><rect x="138" y="380" width="1" height="1" fill="#000"/><rect x="134" y="381" width="1" height="1" fill="#000"/><rect x="138" y="381" width="1" height="1" fill="#000"/><rect x="135" y="382" width="3" height="1" fill="#000"/><rect x="142" y="375" width="3" height="1" fill="#000"/><rect x="141" y="376" width="1" height="1" fill="#000"/><rect x="145" y="376" width="1" height="1" fill="#000"/><rect x="145" y="377" width="1" height="1" fill="#000"/><rect x="144" y="378" width="1" height="1" fill="#000"/><rect x="143" y="379" width="1" height="1" fill="#000"/><rect x="142" y="380" width="1" height="1" fill="#000"/><rect x="141" y="381" width="1" height="1" fill="#000"/><rect x="141" y="382" width="5" height="1" fill="#000"/><rect x="155" y="375" width="2" height="1" fill="#000"/><rect x="154" y="376" width="1" height="1" fill="#000"/><rect x="156" y="376" width="1" height="1" fill="#000"/><rect x="156" y="377" width="1" height="1" fill="#000"/><rect x="156" y="378" width="1" height="1" fill="#000"/><rect x="156" y="379" width="1" height="1" fill="#000"/><rect x="156" y="380" width="1" height="1" fill="#000"/><rect x="156" y="381" width="1" height="1" fill="#000"/><rect x="154" y="382" width="5" height="1" fill="#000"/><rect x="161" y="375" width="5" height="1" fill="#000"/><rect x="161" y="376" width="1" height="1" fill="#000"/><rect x="165" y="376" width="1" height="1" fill="#000"/><rect x="165" y="377" width="1" height="1" fill="#000"/><rect x="164" y="378" width="1" height="1" fill="#000"/><rect x="164" y="379" width="1" height="1" fill="#000"/><rect x="163" y="380" width="1" height="1" fill="#000"/><rect x="163" y="381" width="1" height="1" fill="#000"/><rect x="163" y="382" width="1" height="1" fill="#000"/><rect x="169" y="377" width="2" height="1" fill="#000"/><rect x="169" y="378" width="2" height="1" fill="#000"/><rect x="169" y="381" width="2" height="1" fill="#000"/><rect x="169" y="382" width="2" height="1" fill="#000"/><rect x="176" y="375" width="3" height="1" fill="#000"/><rect x="175" y="376" width="1" height="1" fill="#000"/><rect x="179" y="376" width="1" height="1" fill="#000"/><rect x="175" y="377" width="1" height="1" fill="#000"/><rect x="179" y="377" width="1" height="1" fill="#000"/><rect x="175" y="378" width="1" height="1" fill="#000"/><rect x="179" y="378" width="1" height="1" fill="#000"/><rect x="175" y="379" width="1" height="1" fill="#000"/><rect x="179" y="379" width="1" height="1" fill="#000"/><rect x="175" y="380" width="1" height="1" fill="#000"/><rect x="179" y="380" width="1" height="1" fill="#000"/><rect x="175" y="381" width="1" height="1" fill="#000"/><rect x="179" y="381" width="1" height="1" fill="#000"/><rect x="176" y="382" width="3" height="1" fill="#000"/><rect x="185" y="375" width="1" height="1" fill="#000"/><rect x="184" y="376" width="2" height="1" fill="#000"/><rect x="183" y="377" width="1" height="1" fill="#000"/><rect x="185" y="377" width="1" height="1" fill="#000"/><rect x="182" y="378" width="1" height="1" fill="#000"/><rect x="185" y="378" width="1" height="1" fill="#000"/><rect x="182" y="379" width="1" height="1" fill="#000"/><rect x="185" y="379" width="1" height="1" fill="#000"/><rect x="182" y="380" width="5" height="1" fill="#000"/><rect x="185" y="381" width="1" height="1" fill="#000"/><rect x="184" y="382" width="3" height="1" fill="#000"/><rect x="196" y="375" width="2" height="1" fill="#000"/><rect x="195" y="376" width="1" height="1" fill="#000"/><rect x="197" y="376" width="1" height="1" fill="#000"/><rect x="197" y="377" width="1" height="1" fill="#000"/><rect x="197" y="378" width="1" height="1" fill="#000"/><rect x="197" y="379" width="1" height="1" fill="#000"/><rect x="197" y="380" width="1" height="1" fill="#000"/><rect x="197" y="381" width="1" height="1" fill="#000"/><rect x="195" y="382" width="5" height="1" fill="#000"/><rect x="202" y="375" width="5" height="1" fill="#000"/><rect x="202" y="376" width="1" height="1" fill="#000"/><rect x="206" y="376" width="1" height="1" fill="#000"/><rect x="206" y="377" width="1" height="1" fill="#000"/><rect x="205" y="378" width="1" height="1" fill="#000"/><rect x="205" y="379" width="1" height="1" fill="#000"/><rect x="204" y="380" width="1" height="1" fill="#000"/><rect x="204" y="381" width="1" height="1" fill="#000"/><rect x="204" y="382" width="1" height="1" fill="#000"/><rect x="210" y="377" width="2" height="1" fill="#000"/><rect x="210" y="378" width="2" height="1" fill="#000"/><rect x="210" y="381" width="2" height="1" fill="#000"/><rect x="210" y="382" width="2" height="1" fill="#000"/><rect x="217" y="375" width="3" height="1" fill="#000"/><rect x="216" y="376" width="1" height="1" fill="#000"/><rect x="220" y="376" width="1" height="1" fill="#000"/><rect x="216" y="377" width="1" height="1" fill="#000"/><rect x="220" y="377" width="1" height="1" fill="#000"/><rect x="216" y="378" width="1" height="1" fill="#000"/><rect x="220" y="378" width="1" height="1" fill="#000"/><rect x="216" y="379" width="1" height="1" fill="#000"/><rect x="220" y="379" width="1" height="1" fill="#000"/><rect x="216" y="380" width="1" height="1" fill="#000"/><rect x="220" y="380" width="1" height="1" fill="#000"/><rect x="216" y="381" width="1" height="1" fill="#000"/><rect x="220" y="381" width="1" height="1" fill="#000"/><rect x="217" y="382" width="3" height="1" fill="#000"/><rect x="225" y="375" width="3" height="1" fill="#000"/><rect x="224" y="376" width="1" height="1" fill="#000"/><rect x="223" y="377" width="1" height="1" fill="#000"/><rect x="223" y="378" width="4" height="1" fill="#000"/><rect x="223" y="379" width="1" height="1" fill="#000"/><rect x="227" y="379" width="1" height="1" fill="#000"/><rect x="223" y="380" width="1" height="1" fill="#000"/><rect x="227" y="380" width="1" height="1" fill="#000"/><rect x="223" y="381" width="1" height="1" fill="#000"/><rect x="227" y="381" width="1" height="1" fill="#000"/><rect x="224" y="382" width="3" height="1" fill="#000"/><rect x="236" y="375" width="2" height="1" fill="#000"/><rect x="235" y="376" width="1" height="1" fill="#000"/><rect x="237" y="376" width="1" height="1" fill="#000"/><rect x="237" y="377" width="1" height="1" fill="#000"/><rect x="237" y="378" width="1" height="1" fill="#000"/><rect x="237" y="379" width="1" height="1" fill="#000"/><rect x="237" y="380" width="1" height="1" fill="#000"/><rect x="237" y="381" width="1" height="1" fill="#000"/><rect x="235" y="382" width="5" height="1" fill="#000"/><rect x="242" y="375" width="5" height="1" fill="#000"/><rect x="242" y="376" width="1" height="1" fill="#000"/><rect x="246" y="376" width="1" height="1" fill="#000"/><rect x="246" y="377" width="1" height="1" fill="#000"/><rect x="245" y="378" width="1" height="1" fill="#000"/><rect x="245" y="379" width="1" height="1" fill="#000"/><rect x="244" y="380" width="1" height="1" fill="#000"/><rect x="244" y="381" width="1" height="1" fill="#000"/><rect x="244" y="382" width="1" height="1" fill="#000"/><rect x="250" y="377" width="2" height="1" fill="#000"/><rect x="250" y="378" width="2" height="1" fill="#000"/><rect x="250" y="381" width="2" height="1" fill="#000"/><rect x="250" y="382" width="2" height="1" fill="#000"/><rect x="257" y="375" width="3" height="1" fill="#000"/><rect x="256" y="376" width="1" height="1" fill="#000"/><rect x="260" y="376" width="1" height="1" fill="#000"/><rect x="256" y="377" width="1" height="1" fill="#000"/><rect x="260" y="377" width="1" height="1" fill="#000"/><rect x="256" y="378" width="1" height="1" fill="#000"/><rect x="260" y="378" width="1" height="1" fill="#000"/><rect x="256" y="379" width="1" height="1" fill="#000"/><rect x="260" y="379" width="1" height="1" fill="#000"/><rect x="256" y="380" width="1" height="1" fill="#000"/><rect x="260" y="380" width="1" height="1" fill="#000"/><rect x="256" y="381" width="1" height="1" fill="#000"/><rect x="260" y="381" width="1" height="1" fill="#000"/><rect x="257" y="382" width="3" height="1" fill="#000"/><rect x="264" y="375" width="3" height="1" fill="#000"/><rect x="263" y="376" width="1" height="1" fill="#000"/><rect x="267" y="376" width="1" height="1" fill="#000"/><rect x="263" y="377" width="1" height="1" fill="#000"/><rect x="267" y="377" width="1" height="1" fill="#000"/><rect x="264" y="378" width="3" height="1" fill="#000"/><rect x="263" y="379" width="1" height="1" fill="#000"/><rect x="267" y="379" width="1" height="1" fill="#000"/><rect x="263" y="380" width="1" height="1" fill="#000"/><rect x="267" y="380" width="1" height="1" fill="#000"/><rect x="263" y="381" width="1" height="1" fill="#000"/><rect x="267" y="381" width="1" height="1" fill="#000"/><rect x="264" y="382" width="3" height="1" fill="#000"/><rect x="277" y="375" width="2" height="1" fill="#000"/><rect x="276" y="376" width="1" height="1" fill="#000"/><rect x="278" y="376" width="1" height="1" fill="#000"/><rect x="278" y="377" width="1" height="1" fill="#000"/><rect x="278" y="378" width="1" height="1" fill="#000"/><rect x="278" y="379" width="1" height="1" fill="#000"/><rect x="278" y="380" width="1" height="1" fill="#000"/><rect x="278" y="381" width="1" height="1" fill="#000"/><rect x="276" y="382" width="5" height="1" fill="#000"/><rect x="283" y="375" width="5" height="1" fill="#000"/><rect x="283" y="376" width="1" height="1" fill="#000"/><rect x="287" y="376" width="1" height="1" fill="#000"/><rect x="287" y="377" width="1" height="1" fill="#000"/><rect x="286" y="378" width="1" height="1" fill="#000"/><rect x="286" y="379" width="1" height="1" fill="#000"/><rect x="285" y="380" width="1" height="1" fill="#000"/><rect x="285" y="381" width="1" height="1" fill="#000"/><rect x="285" y="382" width="1" height="1" fill="#000"/><rect x="291" y="377" width="2" height="1" fill="#000"/><rect x="291" y="378" width="2" height="1" fill="#000"/><rect x="291" y="381" width="2" height="1" fill="#000"/><rect x="291" y="382" width="2" height="1" fill="#000"/><rect x="298" y="375" width="2" height="1" fill="#000"/><rect x="297" y="376" width="1" height="1" fill="#000"/><rect x="299" y="376" width="1" height="1" fill="#000"/><rect x="299" y="377" width="1" height="1" fill="#000"/><rect x="299" y="378" width="1" height="1" fill="#000"/><rect x="299" y="379" width="1" height="1" fill="#000"/><rect x="299" y="380" width="1" height="1" fill="#000"/><rect x="299" y="381" width="1" height="1" fill="#000"/><rect x="297" y="382" width="5" height="1" fill="#000"/><rect x="305" y="375" width="3" height="1" fill="#000"/><rect x="304" y="376" width="1" height="1" fill="#000"/><rect x="308" y="376" width="1" height="1" fill="#000"/><rect x="304" y="377" width="1" height="1" fill="#000"/><rect x="308" y="377" width="1" height="1" fill="#000"/><rect x="304" y="378" width="1" height="1" fill="#000"/><rect x="308" y="378" width="1" height="1" fill="#000"/><rect x="304" y="379" width="1" height="1" fill="#000"/><rect x="308" y="379" width="1" height="1" fill="#000"/><rect x="304" y="380" width="1" height="1" fill="#000"/><rect x="308" y="380" width="1" height="1" fill="#000"/><rect x="304" y="381" width="1" height="1" fill="#000"/><rect x="308" y="381" width="1" height="1" fill="#000"/><rect x="305" y="382" width="3" height="1" fill="#000"/><rect x="317" y="375" width="2" height="1" fill="#000"/><rect x="316" y="376" width="1" height="1" fill="#000"/><rect x="318" y="376" width="1" height="1" fill="#000"/><rect x="318" y="377" width="1" height="1" fill="#000"/><rect x="318" y="378" width="1" height="1" fill="#000"/><rect x="318" y="379" width="1" height="1" fill="#000"/><rect x="318" y="380" width="1" height="1" fill="#000"/><rect x="318" y="381" width="1" height="1" fill="#000"/><rect x="316" y="382" width="5" height="1" fill="#000"/><rect x="323" y="375" width="5" height="1" fill="#000"/><rect x="323" y="376" width="1" height="1" fill="#000"/><rect x="327" y="376" width="1" height="1" fill="#000"/><rect x="327" y="377" width="1" height="1" fill="#000"/><rect x="326" y="378" width="1" height="1" fill="#000"/><rect x="326" y="379" width="1" height="1" fill="#000"/><rect x="325" y="380" width="1" height="1" fill="#000"/><rect x="325" y="381" width="1" height="1" fill="#000"/><rect x="325" y="382" width="1" height="1" fill="#000"/><rect x="331" y="377" width="2" height="1" fill="#000"/><rect x="331" y="378" width="2" height="1" fill="#000"/><rect x="331" y="381" width="2" height="1" fill="#000"/><rect x="331" y="382" width="2" height="1" fill="#000"/><rect x="338" y="375" width="2" height="1" fill="#000"/><rect x="337" y="376" width="1" height="1" fill="#000"/><rect x="339" y="376" width="1" height="1" fill="#000"/><rect x="339" y="377" width="1" height="1" fill="#000"/><rect x="339" y="378" width="1" height="1" fill="#000"/><rect x="339" y="379" width="1" height="1" fill="#000"/><rect x="339" y="380" width="1" height="1" fill="#000"/><rect x="339" y="381" width="1" height="1" fill="#000"/><rect x="337" y="382" width="5" height="1" fill="#000"/><rect x="345" y="375" width="3" height="1" fill="#000"/><rect x="344" y="376" width="1" height="1" fill="#000"/><rect x="348" y="376" width="1" height="1" fill="#000"/><rect x="348" y="377" width="1" height="1" fill="#000"/><rect x="347" y="378" width="1" height="1" fill="#000"/><rect x="346" y="379" width="1" height="1" fill="#000"/><rect x="345" y="380" width="1" height="1" fill="#000"/><rect x="344" y="381" width="1" height="1" fill="#000"/><rect x="344" y="382" width="5" height="1" fill="#000"/></svg>
<div class="a" style="left:4px;top:401px;width:746px;height:179px;border-top:1px solid #808080;border-left:1px solid #808080;border-right:1px solid #fff;border-bottom:1px solid #fff"></div>
<div class="a" style="left:5px;top:402px;width:744px;height:177px;border-top:1px solid #000;border-left:1px solid #000;border-right:1px solid #D4D0C8;border-bottom:1px solid #D4D0C8;background:#fff"></div>
<div class="hd" style="left:6px;width:141px"><span class="tx">Protocols</span></div>
<div class="hd" style="left:147px;width:101px"><span class="tx">Utilization %</span></div>
<div class="hd" style="left:248px;width:101px"><span class="tx">Stations</span></div>
<div class="hd" style="left:349px;width:101px"><span class="tx">Connections</span></div>
<div class="hd" style="left:450px;width:101px"><span class="tx">Alerts</span></div>
<div class="hd" style="left:551px;width:101px"><span class="tx">Warnings</span></div>
<div class="hd" style="left:652px;width:96px"><span class="tx">Normals</span></div>
<div class="a" style="left:6px;top:418px;width:742px;height:1px;background:#C0C0C0"></div>
<div class="a" style="left:6px;top:434px;width:742px;height:1px;background:#C0C0C0"></div>
<div class="a" style="left:6px;top:450px;width:742px;height:1px;background:#C0C0C0"></div>
<div class="a" style="left:6px;top:466px;width:742px;height:1px;background:#C0C0C0"></div>
<div class="a" style="left:6px;top:482px;width:742px;height:1px;background:#C0C0C0"></div>
<div class="a" style="left:6px;top:498px;width:742px;height:1px;background:#C0C0C0"></div>
<div class="a" style="left:6px;top:514px;width:742px;height:1px;background:#C0C0C0"></div>
<div class="a" style="left:6px;top:530px;width:742px;height:1px;background:#C0C0C0"></div>
<div class="a" style="left:6px;top:546px;width:742px;height:1px;background:#C0C0C0"></div>
<div class="a" style="left:6px;top:562px;width:742px;height:1px;background:#C0C0C0"></div>
<div class="a" style="left:6px;top:578px;width:742px;height:1px;background:#C0C0C0"></div>
<div class="a" style="left:146px;top:419px;width:1px;height:160px;background:#C0C0C0"></div>
<div class="a" style="left:247px;top:419px;width:1px;height:160px;background:#C0C0C0"></div>
<div class="a" style="left:348px;top:419px;width:1px;height:160px;background:#C0C0C0"></div>
<div class="a" style="left:449px;top:419px;width:1px;height:160px;background:#C0C0C0"></div>
<div class="a" style="left:550px;top:419px;width:1px;height:160px;background:#C0C0C0"></div>
<div class="a" style="left:651px;top:419px;width:1px;height:160px;background:#C0C0C0"></div>
<div class="a" style="left:747px;top:419px;width:1px;height:160px;background:#C0C0C0"></div>
<div class="t" style="left:9px;top:420px">Totals</div>
<div class="num" style="left:147px;width:99px;top:420px">0.01%</div>
<div class="num" style="left:248px;width:99px;top:420px">81</div>
<div class="num" style="left:349px;width:99px;top:420px">66</div>
<div class="num" style="left:450px;width:99px;top:420px">20</div>
<div class="num" style="left:551px;width:99px;top:420px">135</div>
<div class="num" style="left:652px;width:93px;top:420px">6</div>
<div class="a" style="left:248px;top:435px;width:7px;height:15px;background:#80FF80"></div>
<div class="a" style="left:349px;top:435px;width:10px;height:15px;background:#FF80FF"></div>
<div class="a" style="left:551px;top:435px;width:33px;height:15px;background:#FFFF00"></div>
<div class="a" style="left:652px;top:435px;width:31px;height:15px;background:#00FF00"></div>
<div class="sw" style="left:9px;top:438px;background:#FF00FF"></div>
<div class="t" style="left:21px;top:436px">AppleTalk</div>
<div class="num" style="left:147px;width:99px;top:436px">0.00%</div>
<div class="num" style="left:248px;width:99px;top:436px">6</div>
<div class="num" style="left:349px;width:99px;top:436px">7</div>
<div class="num" style="left:450px;width:99px;top:436px">0</div>
<div class="num" style="left:551px;width:99px;top:436px">45</div>
<div class="num" style="left:652px;width:93px;top:436px">2</div>
<div class="a" style="left:248px;top:451px;width:10px;height:15px;background:#80FF80"></div>
<div class="a" style="left:349px;top:451px;width:13px;height:15px;background:#FF80FF"></div>
<div class="a" style="left:450px;top:451px;width:5px;height:15px;background:#FF0000"></div>
<div class="a" style="left:551px;top:451px;width:21px;height:15px;background:#FFFF00"></div>
<div class="a" style="left:652px;top:451px;width:31px;height:15px;background:#00FF00"></div>
<div class="sw" style="left:9px;top:454px;background:#808000"></div>
<div class="t" style="left:21px;top:452px">Banyan</div>
<div class="num" style="left:147px;width:99px;top:452px">0.00%</div>
<div class="num" style="left:248px;width:99px;top:452px">8</div>
<div class="num" style="left:349px;width:99px;top:452px">9</div>
<div class="num" style="left:450px;width:99px;top:452px">1</div>
<div class="num" style="left:551px;width:99px;top:452px">29</div>
<div class="num" style="left:652px;width:93px;top:452px">2</div>
<div class="a" style="left:248px;top:467px;width:2px;height:15px;background:#80FF80"></div>
<div class="a" style="left:349px;top:467px;width:4px;height:15px;background:#FF80FF"></div>
<div class="a" style="left:551px;top:467px;width:2px;height:15px;background:#FFFF00"></div>
<div class="sw" style="left:9px;top:470px;background:#00FF00"></div>
<div class="t" style="left:21px;top:468px">DECnet</div>
<div class="num" style="left:147px;width:99px;top:468px">0.00%</div>
<div class="num" style="left:248px;width:99px;top:468px">2</div>
<div class="num" style="left:349px;width:99px;top:468px">3</div>
<div class="num" style="left:450px;width:99px;top:468px">0</div>
<div class="num" style="left:551px;width:99px;top:468px">3</div>
<div class="num" style="left:652px;width:93px;top:468px">0</div>
<div class="a" style="left:147px;top:483px;width:100px;height:15px;background:#FF80FF"></div>
<div class="a" style="left:248px;top:483px;width:65px;height:15px;background:#80FF80"></div>
<div class="a" style="left:349px;top:483px;width:57px;height:15px;background:#FF80FF"></div>
<div class="a" style="left:450px;top:483px;width:50px;height:15px;background:#FF0000"></div>
<div class="a" style="left:551px;top:483px;width:22px;height:15px;background:#FFFF00"></div>
<div class="a" style="left:652px;top:483px;width:15px;height:15px;background:#00FF00"></div>
<div class="sw" style="left:9px;top:486px;background:#00FFFF"></div>
<div class="t" style="left:21px;top:484px">IP</div>
<div class="num" style="left:147px;width:99px;top:484px">0.01%</div>
<div class="num" style="left:248px;width:99px;top:484px">53</div>
<div class="num" style="left:349px;width:99px;top:484px">38</div>
<div class="num" style="left:450px;width:99px;top:484px">10</div>
<div class="num" style="left:551px;width:99px;top:484px">31</div>
<div class="num" style="left:652px;width:93px;top:484px">1</div>
<div class="a" style="left:248px;top:499px;width:8px;height:15px;background:#80FF80"></div>
<div class="a" style="left:349px;top:499px;width:13px;height:15px;background:#FF80FF"></div>
<div class="a" style="left:450px;top:499px;width:45px;height:15px;background:#FF0000"></div>
<div class="a" style="left:551px;top:499px;width:14px;height:15px;background:#FFFF00"></div>
<div class="sw" style="left:9px;top:502px;background:#FFFFFF"></div>
<div class="t" style="left:21px;top:500px">Novell</div>
<div class="num" style="left:147px;width:99px;top:500px">0.00%</div>
<div class="num" style="left:248px;width:99px;top:500px">7</div>
<div class="num" style="left:349px;width:99px;top:500px">9</div>
<div class="num" style="left:450px;width:99px;top:500px">9</div>
<div class="num" style="left:551px;width:99px;top:500px">20</div>
<div class="num" style="left:652px;width:93px;top:500px">0</div>
<div class="a" style="left:248px;top:515px;width:1px;height:15px;background:#80FF80"></div>
<div class="a" style="left:551px;top:515px;width:5px;height:15px;background:#FFFF00"></div>
<div class="a" style="left:652px;top:515px;width:15px;height:15px;background:#00FF00"></div>
<div class="sw" style="left:9px;top:518px;background:#FF8000"></div>
<div class="t" style="left:21px;top:516px">OSI</div>
<div class="num" style="left:147px;width:99px;top:516px">0.00%</div>
<div class="num" style="left:248px;width:99px;top:516px">1</div>
<div class="num" style="left:349px;width:99px;top:516px">0</div>
<div class="num" style="left:450px;width:99px;top:516px">0</div>
<div class="num" style="left:551px;width:99px;top:516px">7</div>
<div class="num" style="left:652px;width:93px;top:516px">1</div>
<div class="a" style="left:248px;top:531px;width:4px;height:15px;background:#80FF80"></div>
<div class="a" style="left:349px;top:531px;width:100px;height:15px;background:#808080"></div>
<div class="sw" style="left:9px;top:534px;background:#808080"></div>
<div class="t" style="left:21px;top:532px">Other Protocols</div>
<div class="num" style="left:147px;width:99px;top:532px">0.00%</div>
<div class="num" style="left:248px;width:99px;top:532px">4</div>
<div class="num" style="left:450px;width:99px;top:532px">0</div>
<div class="num" style="left:551px;width:99px;top:532px">0</div>
<div class="num" style="left:652px;width:93px;top:532px">0</div>
<div class="a" style="left:248px;top:547px;width:44px;height:15px;background:#80FF80"></div>
<div class="sw" style="left:9px;top:550px;background:#800000"></div>
<div class="t" style="left:21px;top:548px">MAC Level</div>
<div class="num" style="left:147px;width:99px;top:548px">0.00%</div>
<div class="num" style="left:248px;width:99px;top:548px">36</div>
<div class="num" style="left:349px;width:99px;top:548px">66</div>
<div class="num" style="left:450px;width:99px;top:548px">0</div>
<div class="num" style="left:551px;width:99px;top:548px">0</div>
<div class="num" style="left:652px;width:93px;top:548px">0</div>
<div class="a" style="left:147px;top:563px;width:100px;height:15px;background:#808080"></div>
<div class="a" style="left:248px;top:563px;width:6px;height:15px;background:#80FF80"></div>
<div class="a" style="left:349px;top:563px;width:100px;height:15px;background:#808080"></div>
<div class="a" style="left:551px;top:563px;width:32px;height:15px;background:#FFFF00"></div>
<div class="a" style="left:652px;top:563px;width:95px;height:15px;background:#00FF00"></div>
<div class="t" style="left:9px;top:564px">Routers</div>
<div class="num" style="left:248px;width:99px;top:564px">5</div>
<div class="num" style="left:450px;width:99px;top:564px">0</div>
<div class="num" style="left:551px;width:99px;top:564px">44</div>
<div class="num" style="left:652px;width:93px;top:564px">6</div>
<div class="a" style="left:246px;top:513px;width:104px;height:19px;border:2px solid #202020"></div>
<div class="t" style="left:5px;top:584px">Ready</div>
<div class="sunk" style="left:268px;top:582px;width:98px;height:16px"><div class="t" style="left:1px;top:1px">FastEth</div></div>
<div class="sunk" style="left:367px;top:582px;width:46px;height:16px"><div class="t" style="left:1px;top:1px">Off-Line</div></div>
<div class="sunk" style="left:415px;top:582px;width:22px;height:16px"><svg class="a" style="left:3px;top:3px" width="13" height="10" shape-rendering="crispEdges"><rect x="1" y="0" width="4" height="1" fill="#000000"/><rect x="0" y="1" width="1" height="1" fill="#000000"/><rect x="1" y="1" width="4" height="1" fill="#FFFF00"/><rect x="5" y="1" width="1" height="1" fill="#000000"/><rect x="0" y="2" width="1" height="1" fill="#000000"/><rect x="1" y="2" width="4" height="1" fill="#FFFF00"/><rect x="5" y="2" width="7" height="1" fill="#000000"/><rect x="0" y="3" width="1" height="1" fill="#000000"/><rect x="1" y="3" width="2" height="1" fill="#FFFF00"/><rect x="3" y="3" width="1" height="1" fill="#FFFFFF"/><rect x="4" y="3" width="1" height="1" fill="#FFFF00"/><rect x="5" y="3" width="1" height="1" fill="#FFFFFF"/><rect x="6" y="3" width="1" height="1" fill="#FFFF00"/><rect x="7" y="3" width="1" height="1" fill="#FFFFFF"/><rect x="8" y="3" width="1" height="1" fill="#FFFF00"/><rect x="9" y="3" width="1" height="1" fill="#FFFFFF"/><rect x="10" y="3" width="1" height="1" fill="#FFFF00"/><rect x="11" y="3" width="1" height="1" fill="#000000"/><rect x="0" y="4" width="1" height="1" fill="#000000"/><rect x="1" y="4" width="1" height="1" fill="#FFFF00"/><rect x="2" y="4" width="1" height="1" fill="#FFFFFF"/><rect x="3" y="4" width="1" height="1" fill="#FFFF00"/><rect x="4" y="4" width="1" height="1" fill="#FFFFFF"/><rect x="5" y="4" width="1" height="1" fill="#FFFF00"/><rect x="6" y="4" width="1" height="1" fill="#FFFFFF"/><rect x="7" y="4" width="1" height="1" fill="#FFFF00"/><rect x="8" y="4" width="1" height="1" fill="#FFFFFF"/><rect x="9" y="4" width="1" height="1" fill="#FFFF00"/><rect x="10" y="4" width="1" height="1" fill="#FFFFFF"/><rect x="11" y="4" width="2" height="1" fill="#000000"/><rect x="0" y="5" width="1" height="1" fill="#000000"/><rect x="1" y="5" width="2" height="1" fill="#FFFF00"/><rect x="3" y="5" width="1" height="1" fill="#FFFFFF"/><rect x="4" y="5" width="1" height="1" fill="#FFFF00"/><rect x="5" y="5" width="1" height="1" fill="#FFFFFF"/><rect x="6" y="5" width="1" height="1" fill="#FFFF00"/><rect x="7" y="5" width="1" height="1" fill="#FFFFFF"/><rect x="8" y="5" width="1" height="1" fill="#FFFF00"/><rect x="9" y="5" width="1" height="1" fill="#FFFFFF"/><rect x="10" y="5" width="1" height="1" fill="#FFFF00"/><rect x="11" y="5" width="2" height="1" fill="#000000"/><rect x="0" y="6" width="1" height="1" fill="#000000"/><rect x="1" y="6" width="1" height="1" fill="#FFFF00"/><rect x="2" y="6" width="1" height="1" fill="#FFFFFF"/><rect x="3" y="6" width="1" height="1" fill="#FFFF00"/><rect x="4" y="6" width="1" height="1" fill="#FFFFFF"/><rect x="5" y="6" width="1" height="1" fill="#FFFF00"/><rect x="6" y="6" width="1" height="1" fill="#FFFFFF"/><rect x="7" y="6" width="1" height="1" fill="#FFFF00"/><rect x="8" y="6" width="1" height="1" fill="#FFFFFF"/><rect x="9" y="6" width="1" height="1" fill="#FFFF00"/><rect x="10" y="6" width="1" height="1" fill="#FFFFFF"/><rect x="11" y="6" width="2" height="1" fill="#000000"/><rect x="0" y="7" width="1" height="1" fill="#000000"/><rect x="1" y="7" width="2" height="1" fill="#FFFF00"/><rect x="3" y="7" width="1" height="1" fill="#FFFFFF"/><rect x="4" y="7" width="1" height="1" fill="#FFFF00"/><rect x="5" y="7" width="1" height="1" fill="#FFFFFF"/><rect x="6" y="7" width="1" height="1" fill="#FFFF00"/><rect x="7" y="7" width="1" height="1" fill="#FFFFFF"/><rect x="8" y="7" width="1" height="1" fill="#FFFF00"/><rect x="9" y="7" width="1" height="1" fill="#FFFFFF"/><rect x="10" y="7" width="1" height="1" fill="#FFFF00"/><rect x="11" y="7" width="2" height="1" fill="#000000"/><rect x="0" y="8" width="13" height="1" fill="#000000"/><rect x="1" y="9" width="12" height="1" fill="#000000"/></svg></div>
<div class="sunk" style="left:438px;top:582px;width:22px;height:16px"><div class="a" style="left:0;top:0;width:16px;height:14px;background:#C0C0C0"></div><svg class="a" style="left:0px;top:0px" width="16" height="11" shape-rendering="crispEdges"><rect x="0" y="0" width="16" height="1" fill="#808080"/><rect x="1" y="1" width="3" height="1" fill="#808080"/><rect x="4" y="1" width="1" height="1" fill="#FFFFFF"/><rect x="5" y="1" width="1" height="1" fill="#808080"/><rect x="6" y="1" width="1" height="1" fill="#FFFFFF"/><rect x="7" y="1" width="1" height="1" fill="#808080"/><rect x="8" y="1" width="1" height="1" fill="#FFFFFF"/><rect x="9" y="1" width="1" height="1" fill="#808080"/><rect x="10" y="1" width="1" height="1" fill="#FFFFFF"/><rect x="11" y="1" width="3" height="1" fill="#808080"/><rect x="2" y="2" width="11" height="1" fill="#808080"/><rect x="3" y="3" width="9" height="1" fill="#808080"/><rect x="12" y="3" width="1" height="1" fill="#FFFFFF"/><rect x="4" y="4" width="7" height="1" fill="#808080"/><rect x="11" y="4" width="1" height="1" fill="#FFFFFF"/><rect x="5" y="5" width="6" height="1" fill="#808080"/><rect x="11" y="5" width="1" height="1" fill="#FFFFFF"/><rect x="6" y="6" width="4" height="1" fill="#808080"/><rect x="10" y="6" width="1" height="1" fill="#FFFFFF"/><rect x="6" y="7" width="4" height="1" fill="#808080"/><rect x="10" y="7" width="1" height="1" fill="#FFFFFF"/><rect x="6" y="8" width="4" height="1" fill="#808080"/><rect x="10" y="8" width="1" height="1" fill="#FFFFFF"/><rect x="6" y="9" width="4" height="1" fill="#808080"/><rect x="10" y="9" width="1" height="1" fill="#FFFFFF"/><rect x="6" y="10" width="4" height="1" fill="#808080"/><rect x="10" y="10" width="6" height="1" fill="#FFFFFF"/></svg></div>
<div class="sunk" style="left:461px;top:582px;width:23px;height:16px"><div class="a" style="left:0;top:0;width:17px;height:14px;background:#C0C0C0"></div><svg class="a" style="left:4px;top:2px" width="11" height="10" shape-rendering="crispEdges"><rect x="4" y="0" width="2" height="1" fill="#000000"/><rect x="3" y="1" width="5" height="1" fill="#000000"/><rect x="1" y="2" width="2" height="1" fill="#000000"/><rect x="4" y="2" width="2" height="1" fill="#000000"/><rect x="8" y="2" width="2" height="1" fill="#000000"/><rect x="0" y="3" width="1" height="1" fill="#000000"/><rect x="10" y="3" width="1" height="1" fill="#000000"/><rect x="0" y="4" width="1" height="1" fill="#000000"/><rect x="10" y="4" width="1" height="1" fill="#000000"/><rect x="0" y="5" width="1" height="1" fill="#000000"/><rect x="10" y="5" width="1" height="1" fill="#000000"/><rect x="0" y="6" width="1" height="1" fill="#000000"/><rect x="10" y="6" width="1" height="1" fill="#000000"/><rect x="1" y="7" width="1" height="1" fill="#000000"/><rect x="9" y="7" width="1" height="1" fill="#000000"/><rect x="2" y="8" width="2" height="1" fill="#000000"/><rect x="7" y="8" width="2" height="1" fill="#000000"/><rect x="4" y="9" width="3" height="1" fill="#000000"/></svg></div>
<div class="sunk" style="left:486px;top:582px;width:24px;height:16px"><div class="a" style="left:0;top:0;width:17px;height:14px;background:#C0C0C0"></div><svg class="a" style="left:3px;top:1px" width="12" height="11" shape-rendering="crispEdges"><rect x="3" y="0" width="6" height="1" fill="#000000"/><rect x="2" y="1" width="1" height="1" fill="#000000"/><rect x="3" y="1" width="6" height="1" fill="#FF0000"/><rect x="9" y="1" width="1" height="1" fill="#000000"/><rect x="1" y="2" width="1" height="1" fill="#000000"/><rect x="2" y="2" width="8" height="1" fill="#FF0000"/><rect x="10" y="2" width="1" height="1" fill="#000000"/><rect x="0" y="3" width="1" height="1" fill="#000000"/><rect x="1" y="3" width="10" height="1" fill="#FF0000"/><rect x="11" y="3" width="1" height="1" fill="#000000"/><rect x="0" y="4" width="1" height="1" fill="#000000"/><rect x="1" y="4" width="10" height="1" fill="#FF0000"/><rect x="11" y="4" width="1" height="1" fill="#000000"/><rect x="0" y="5" width="1" height="1" fill="#000000"/><rect x="1" y="5" width="10" height="1" fill="#FF0000"/><rect x="11" y="5" width="1" height="1" fill="#000000"/><rect x="0" y="6" width="1" height="1" fill="#000000"/><rect x="1" y="6" width="10" height="1" fill="#FF0000"/><rect x="11" y="6" width="1" height="1" fill="#000000"/><rect x="0" y="7" width="1" height="1" fill="#000000"/><rect x="1" y="7" width="10" height="1" fill="#FF0000"/><rect x="11" y="7" width="1" height="1" fill="#000000"/><rect x="1" y="8" width="1" height="1" fill="#000000"/><rect x="2" y="8" width="8" height="1" fill="#FF0000"/><rect x="10" y="8" width="1" height="1" fill="#000000"/><rect x="2" y="9" width="1" height="1" fill="#000000"/><rect x="3" y="9" width="6" height="1" fill="#FF0000"/><rect x="9" y="9" width="1" height="1" fill="#000000"/><rect x="3" y="10" width="6" height="1" fill="#000000"/></svg></div>
<div class="sunk" style="left:511px;top:582px;width:57px;height:16px"><div class="t" style="left:2px;top:1px">000:00:00</div></div>
<div class="sunk" style="left:570px;top:582px;width:129px;height:16px"><div class="t" style="left:1px;top:1px">TX</div></div>
<div class="sunk" style="left:701px;top:582px;width:49px;height:16px"><div class="t" style="left:1px;top:1px">10 Mb</div></div>
<svg class="a" style="left:737px;top:586px" width="13" height="13" shape-rendering="crispEdges"><rect x="1" y="12" width="1" height="1" fill="#FFFFFF"/><rect x="2" y="11" width="1" height="1" fill="#FFFFFF"/><rect x="3" y="10" width="1" height="1" fill="#FFFFFF"/><rect x="4" y="9" width="1" height="1" fill="#FFFFFF"/><rect x="5" y="8" width="1" height="1" fill="#FFFFFF"/><rect x="6" y="7" width="1" height="1" fill="#FFFFFF"/><rect x="7" y="6" width="1" height="1" fill="#FFFFFF"/><rect x="8" y="5" width="1" height="1" fill="#FFFFFF"/><rect x="9" y="4" width="1" height="1" fill="#FFFFFF"/><rect x="10" y="3" width="1" height="1" fill="#FFFFFF"/><rect x="11" y="2" width="1" height="1" fill="#FFFFFF"/><rect x="12" y="1" width="1" height="1" fill="#FFFFFF"/><rect x="2" y="12" width="1" height="1" fill="#808080"/><rect x="3" y="11" width="1" height="1" fill="#808080"/><rect x="4" y="10" width="1" height="1" fill="#808080"/><rect x="5" y="9" width="1" height="1" fill="#808080"/><rect x="6" y="8" width="1" height="1" fill="#808080"/><rect x="7" y="7" width="1" height="1" fill="#808080"/><rect x="8" y="6" width="1" height="1" fill="#808080"/><rect x="9" y="5" width="1" height="1" fill="#808080"/><rect x="10" y="4" width="1" height="1" fill="#808080"/><rect x="11" y="3" width="1" height="1" fill="#808080"/><rect x="12" y="2" width="1" height="1" fill="#808080"/><rect x="3" y="12" width="1" height="1" fill="#808080"/><rect x="4" y="11" width="1" height="1" fill="#808080"/><rect x="5" y="10" width="1" height="1" fill="#808080"/><rect x="6" y="9" width="1" height="1" fill="#808080"/><rect x="7" y="8" width="1" height="1" fill="#808080"/><rect x="8" y="7" width="1" height="1" fill="#808080"/><rect x="9" y="6" width="1" height="1" fill="#808080"/><rect x="10" y="5" width="1" height="1" fill="#808080"/><rect x="11" y="4" width="1" height="1" fill="#808080"/><rect x="12" y="3" width="1" height="1" fill="#808080"/><rect x="5" y="12" width="1" height="1" fill="#FFFFFF"/><rect x="6" y="11" width="1" height="1" fill="#FFFFFF"/><rect x="7" y="10" width="1" height="1" fill="#FFFFFF"/><rect x="8" y="9" width="1" height="1" fill="#FFFFFF"/><rect x="9" y="8" width="1" height="1" fill="#FFFFFF"/><rect x="10" y="7" width="1" height="1" fill="#FFFFFF"/><rect x="11" y="6" width="1" height="1" fill="#FFFFFF"/><rect x="12" y="5" width="1" height="1" fill="#FFFFFF"/><rect x="6" y="12" width="1" height="1" fill="#808080"/><rect x="7" y="11" width="1" height="1" fill="#808080"/><rect x="8" y="10" width="1" height="1" fill="#808080"/><rect x="9" y="9" width="1" height="1" fill="#808080"/><rect x="10" y="8" width="1" height="1" fill="#808080"/><rect x="11" y="7" width="1" height="1" fill="#808080"/><rect x="12" y="6" width="1" height="1" fill="#808080"/><rect x="7" y="12" width="1" height="1" fill="#808080"/><rect x="8" y="11" width="1" height="1" fill="#808080"/><rect x="9" y="10" width="1" height="1" fill="#808080"/><rect x="10" y="9" width="1" height="1" fill="#808080"/><rect x="11" y="8" width="1" height="1" fill="#808080"/><rect x="12" y="7" width="1" height="1" fill="#808080"/><rect x="9" y="12" width="1" height="1" fill="#FFFFFF"/><rect x="10" y="11" width="1" height="1" fill="#FFFFFF"/><rect x="11" y="10" width="1" height="1" fill="#FFFFFF"/><rect x="12" y="9" width="1" height="1" fill="#FFFFFF"/><rect x="10" y="12" width="1" height="1" fill="#808080"/><rect x="11" y="11" width="1" height="1" fill="#808080"/><rect x="12" y="10" width="1" height="1" fill="#808080"/><rect x="11" y="12" width="1" height="1" fill="#808080"/><rect x="12" y="11" width="1" height="1" fill="#808080"/></svg>
</div></body></html>
